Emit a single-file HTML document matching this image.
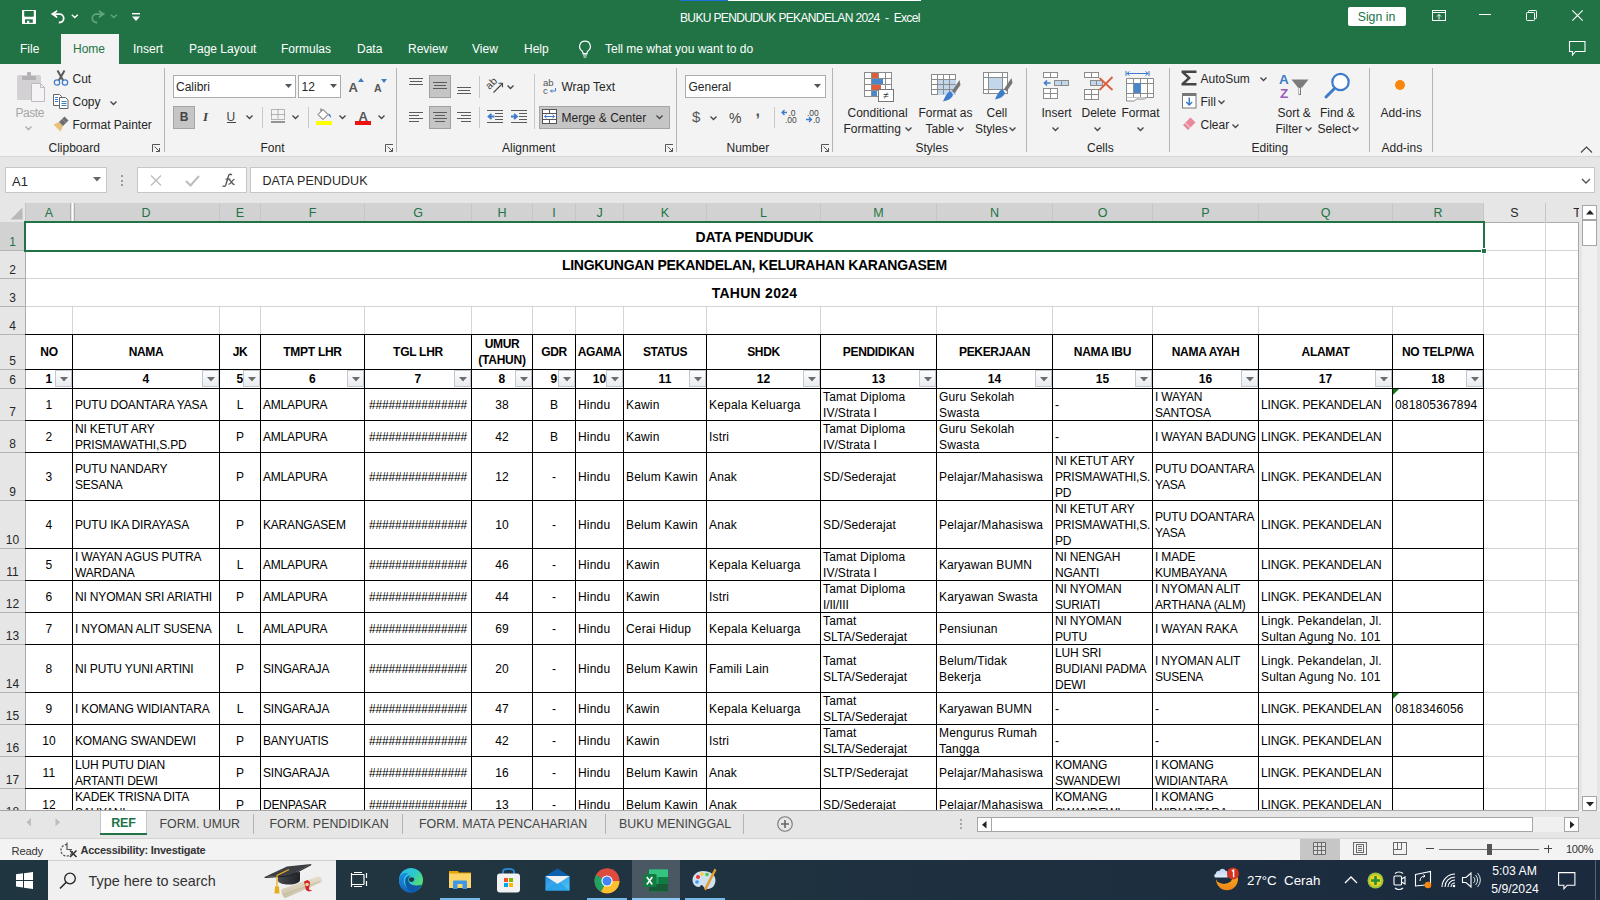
<!DOCTYPE html>
<html><head><meta charset="utf-8"><title>Excel</title>
<style>
html,body{margin:0;padding:0;width:1600px;height:900px;overflow:hidden;background:#fff;}
body{position:relative;font-family:"Liberation Sans", sans-serif;}
.t{position:absolute;white-space:pre;}
.r{position:absolute;box-sizing:border-box;}
svg.r{overflow:visible}
</style></head><body>
<div class="r" style="left:0px;top:0px;width:1600px;height:64px;background:#217346"></div><div class="r" style="left:680px;top:0px;width:241px;height:1px;background:#ffffff"></div><div class="r" style="left:680px;top:0px;width:48px;height:1px;background:#1e6fd9"></div><svg class="r" style="left:21px;top:9px;" width="17" height="17" viewBox="0 0 17 17"><rect x="1" y="1" width="14" height="14" rx="0.8" fill="#fff"/><path d="M3.2 2.1h9.6v4.6q0 1-1 1H4.2q-1 0-1-1z" fill="#217346"/><rect x="4" y="10.3" width="7.8" height="3.5" fill="#217346"/><rect x="6" y="11.8" width="2.3" height="2.2" fill="#fff"/></svg><svg class="r" style="left:50px;top:9px;" width="18" height="15" viewBox="0 0 18 15"><path d="M0.8 5.1L7 0.9 7.4 2.6 4.6 5.1 7.4 7.6 7 9.3z" fill="#fff"/><path d="M5 5.1H9.5a4.2 4.2 0 0 1 0 8.4H8.8" fill="none" stroke="#fff" stroke-width="1.8"/></svg><svg class="r" style="left:71px;top:14px;" width="8" height="5" viewBox="0 0 8 5"><path d="M0.8 0.8L3.8 3.6L6.8 0.8" fill="none" stroke="#fff" stroke-width="1.4"/></svg><svg class="r" style="left:89px;top:9px;" width="18" height="15" viewBox="0 0 18 15"><path d="M16.2 5.1L10 0.9 9.6 2.6 12.4 5.1 9.6 7.6 10 9.3z" fill="#5fa57d"/><path d="M12 5.1H7.5a4.2 4.2 0 0 0 0 8.4H8.2" fill="none" stroke="#5fa57d" stroke-width="1.8"/></svg><svg class="r" style="left:110px;top:14px;" width="8" height="5" viewBox="0 0 8 5"><path d="M0.8 0.8L3.8 3.6L6.8 0.8" fill="none" stroke="#5fa57d" stroke-width="1.4"/></svg><svg class="r" style="left:132px;top:13px;" width="8" height="9" viewBox="0 0 8 9"><rect x="0" y="0" width="8" height="1.4" fill="#fff"/><path d="M0 3.5h8L4 8z" fill="#fff"/></svg><div class="t" style="top:11.84px;font-size:12px;line-height:12px;color:#ffffff;letter-spacing:-0.64px;left:680px;">BUKU PENDUDUK PEKANDELAN 2024&nbsp;&nbsp;-&nbsp;&nbsp;Excel</div><div class="r" style="left:1348px;top:7px;width:58px;height:19px;background:#fff;border-radius:2px"></div><div class="t" style="top:11.09px;font-size:12.3px;line-height:12.3px;color:#217346;left:1347.50px;width:58px;text-align:center;">Sign in</div><svg class="r" style="left:1432px;top:10px;" width="14" height="11" viewBox="0 0 14 11"><rect x="0.5" y="0.5" width="13" height="10" fill="none" stroke="#fff" stroke-width="1"/><path d="M0.5 2.5h13" stroke="#fff" stroke-width="1"/><path d="M7 9.5V4.5M5 6.5l2-2 2 2" fill="none" stroke="#fff" stroke-width="1"/></svg><div class="r" style="left:1479px;top:14px;width:12px;height:1px;background:#fff"></div><svg class="r" style="left:1526px;top:10px;" width="11" height="11" viewBox="0 0 11 11"><rect x="0.5" y="2.5" width="8" height="8" rx="0.8" fill="none" stroke="#fff" stroke-width="1"/><path d="M2.5 2.5V1.3q0-.8.8-.8h6.4q.8 0 .8.8v6.4q0 .8-.8.8H8.5" fill="none" stroke="#fff" stroke-width="1"/></svg><svg class="r" style="left:1572px;top:10px;" width="11" height="11" viewBox="0 0 11 11"><path d="M0.3 0.3L10.7 10.7M10.7 0.3L0.3 10.7" stroke="#fff" stroke-width="1.1"/></svg><div class="r" style="left:61px;top:34px;width:58px;height:31px;background:#f3f3f3"></div><div class="t" style="top:42.84px;font-size:12px;line-height:12px;color:#ffffff;left:20px;">File</div><div class="t" style="top:42.84px;font-size:12px;line-height:12px;color:#217346;left:73px;">Home</div><div class="t" style="top:42.84px;font-size:12px;line-height:12px;color:#ffffff;left:133px;">Insert</div><div class="t" style="top:42.84px;font-size:12px;line-height:12px;color:#ffffff;left:189px;">Page Layout</div><div class="t" style="top:42.84px;font-size:12px;line-height:12px;color:#ffffff;left:281px;">Formulas</div><div class="t" style="top:42.84px;font-size:12px;line-height:12px;color:#ffffff;left:357px;">Data</div><div class="t" style="top:42.84px;font-size:12px;line-height:12px;color:#ffffff;left:408px;">Review</div><div class="t" style="top:42.84px;font-size:12px;line-height:12px;color:#ffffff;left:472px;">View</div><div class="t" style="top:42.84px;font-size:12px;line-height:12px;color:#ffffff;left:524px;">Help</div><svg class="r" style="left:578px;top:40px;" width="14" height="18" viewBox="0 0 14 18"><path d="M7 1.2a5.3 5.3 0 0 0-3 9.7c.6.5.9 1.1.9 1.9v.8h4.2v-.8c0-.8.3-1.4.9-1.9A5.3 5.3 0 0 0 7 1.2z" fill="none" stroke="#fff" stroke-width="1.2"/><path d="M5 15h4M5.5 17h3" stroke="#fff" stroke-width="1.2"/></svg><div class="t" style="top:42.84px;font-size:12px;line-height:12px;color:#ffffff;left:605px;">Tell me what you want to do</div><svg class="r" style="left:1569px;top:41px;" width="17" height="15" viewBox="0 0 17 15"><path d="M0.5 0.5h15.5v10H6.5l-3 3.5V10.5H0.5z" fill="none" stroke="#fff" stroke-width="1.1"/></svg><div class="r" style="left:0px;top:64px;width:1600px;height:92px;background:#f3f3f3"></div><div class="r" style="left:0px;top:156px;width:1600px;height:1px;background:#d6d6d6"></div><svg class="r" style="left:17px;top:72px;" width="29" height="31" viewBox="0 0 29 31"><rect x="0" y="3" width="24" height="25" rx="1.5" fill="#d3d1d3"/><rect x="5" y="4" width="14" height="4" rx="1" fill="#b3b1b3"/><rect x="10" y="0" width="4" height="4" rx="1" fill="#b3b1b3"/><path d="M14.5 11.5h9l4 4v14h-13z" fill="#f5f3f5" stroke="#bdbbbd" stroke-width="1"/><path d="M23.5 11.5v4h4" fill="none" stroke="#bdbbbd" stroke-width="1"/></svg><div class="t" style="top:106.84px;font-size:12px;line-height:12px;color:#a6a6a6;letter-spacing:-0.45px;left:15.5px;">Paste</div><svg class="r" style="left:25px;top:126px;" width="7" height="4" viewBox="0 0 7 4"><path d="M0.5 0.5L3.5 3.5L6.5 0.5" fill="none" stroke="#aaa" stroke-width="1.3"/></svg><svg class="r" style="left:53px;top:70px;" width="16" height="16" viewBox="0 0 16 16"><path d="M4.5 0.5L10.2 10.5M11.5 0.5L5.8 10.5" stroke="#5a5a5a" stroke-width="2"/><circle cx="4" cy="12.5" r="2.7" fill="none" stroke="#3d7cc9" stroke-width="1.2"/><circle cx="12" cy="12.5" r="2.7" fill="none" stroke="#3d7cc9" stroke-width="1.2"/></svg><div class="t" style="top:72.84px;font-size:12px;line-height:12px;color:#262626;left:72.5px;">Cut</div><svg class="r" style="left:53px;top:94px;" width="16" height="15" viewBox="0 0 16 15"><path d="M0.5 0.5h6l2 2v9h-8z" fill="#fff" stroke="#666" stroke-width="1"/><path d="M6.5 3.5h6l2.5 2.5v8.5h-8.5z" fill="#fff" stroke="#666" stroke-width="1"/><path d="M2 3.5h3M2 5.5h3M2 7.5h3" stroke="#3d7cc9" stroke-width="1"/><path d="M8.5 7.5h5M8.5 9.5h5M8.5 11.5h5" stroke="#3d7cc9" stroke-width="1"/></svg><div class="t" style="top:95.84px;font-size:12px;line-height:12px;color:#262626;left:72.5px;">Copy</div><svg class="r" style="left:110px;top:101px;" width="7" height="4" viewBox="0 0 7 4"><path d="M0.5 0.5L3.5 3.5L6.5 0.5" fill="none" stroke="#444" stroke-width="1.3"/></svg><svg class="r" style="left:53px;top:116px;" width="17" height="16" viewBox="0 0 17 16"><path d="M0.5 8.5L6 6l4 4-2.5 5.5z" fill="#e8c078"/><path d="M6 6l4 4 3-3-4-4z" fill="#6e6e6e"/><path d="M9 3l2.5-2.5 4 4L13 7z" fill="#6e6e6e"/></svg><div class="t" style="top:118.84px;font-size:12px;line-height:12px;color:#262626;left:72.5px;">Format Painter</div><div class="t" style="top:141.84px;font-size:12px;line-height:12px;color:#262626;left:48.5px;">Clipboard</div><svg class="r" style="left:152px;top:144px;" width="9" height="9" viewBox="0 0 9 9"><path d="M0.5 8V0.5H8" fill="none" stroke="#555" stroke-width="1"/><path d="M2.5 2.5L7.5 7.5M4 7.5h3.5V4" fill="none" stroke="#555" stroke-width="1"/></svg><div class="r" style="left:164px;top:68px;width:1px;height:84px;background:#b4b4b4"></div><div class="r" style="left:173px;top:75px;width:123px;height:23px;background:#fff;border:1px solid #ababab"></div><div class="t" style="top:80.84px;font-size:12px;line-height:12px;color:#262626;left:176px;">Calibri</div><svg class="r" style="left:285px;top:84px;" width="7" height="4" viewBox="0 0 7 4"><path d="M0 0h7L3.5 4z" fill="#555"/></svg><div class="r" style="left:298px;top:75px;width:43px;height:23px;background:#fff;border:1px solid #ababab"></div><div class="t" style="top:80.84px;font-size:12px;line-height:12px;color:#262626;left:301.5px;">12</div><svg class="r" style="left:330px;top:84px;" width="7" height="4" viewBox="0 0 7 4"><path d="M0 0h7L3.5 4z" fill="#555"/></svg><div class="t" style="top:81.00px;font-size:13px;line-height:13px;color:#555;font-weight:700;left:348.5px;">A</div><svg class="r" style="left:358px;top:78px;" width="6" height="4" viewBox="0 0 6 4"><path d="M0 4h6L3 0z" fill="#3d7cc9"/></svg><div class="t" style="top:83.11px;font-size:10.5px;line-height:10.5px;color:#555;font-weight:700;left:374px;">A</div><svg class="r" style="left:381px;top:79px;" width="6" height="4" viewBox="0 0 6 4"><path d="M0 0h6L3 4z" fill="#3d7cc9"/></svg><div class="r" style="left:173px;top:106px;width:22px;height:23px;background:#c5c5c5;border:1px solid #a5a5a5"></div><div class="t" style="top:110.84px;font-size:12px;line-height:12px;color:#444;font-weight:700;left:173.00px;width:22px;text-align:center;">B</div><div class="t" style="left:203px;top:110px;font-size:13px;line-height:13px;color:#444;font-family:'Liberation Serif',serif;font-style:italic;font-weight:700">I</div><div class="t" style="top:110.84px;font-size:12px;line-height:12px;color:#444;left:226.5px;">U</div><div class="r" style="left:227px;top:122px;width:9px;height:1px;background:#444"></div><svg class="r" style="left:246px;top:115px;" width="7" height="4" viewBox="0 0 7 4"><path d="M0.5 0.5L3.5 3.5L6.5 0.5" fill="none" stroke="#444" stroke-width="1.3"/></svg><div class="r" style="left:262px;top:107px;width:1px;height:21px;background:#c8c8c8"></div><svg class="r" style="left:271px;top:109px;" width="14" height="14" viewBox="0 0 14 14"><path d="M0.5 0.5h13v10h-13zM7 0.5v10M0.5 5.5h13" fill="none" stroke="#777" stroke-width="1" stroke-dasharray="1 1"/><path d="M0 13h14" stroke="#555" stroke-width="1.2"/></svg><svg class="r" style="left:292px;top:115px;" width="7" height="4" viewBox="0 0 7 4"><path d="M0.5 0.5L3.5 3.5L6.5 0.5" fill="none" stroke="#444" stroke-width="1.3"/></svg><div class="r" style="left:308px;top:107px;width:1px;height:21px;background:#c8c8c8"></div><svg class="r" style="left:316px;top:108px;" width="17" height="13" viewBox="0 0 17 13"><path d="M2 6.5L7 1.5l5 5-5 5z" fill="#fff" stroke="#555" stroke-width="1"/><path d="M5 3V0.5" stroke="#555" stroke-width="1"/><path d="M12.5 5.5c2 1 3 2.5 2.5 4.5-.6-1-1.4-2-2.5-2.5z" fill="#3d7cc9"/></svg><div class="r" style="left:316px;top:121px;width:16px;height:4px;background:#ffff00"></div><svg class="r" style="left:339px;top:115px;" width="7" height="4" viewBox="0 0 7 4"><path d="M0.5 0.5L3.5 3.5L6.5 0.5" fill="none" stroke="#444" stroke-width="1.3"/></svg><div class="t" style="top:109.50px;font-size:13px;line-height:13px;color:#555;font-weight:700;left:358.5px;">A</div><div class="r" style="left:355px;top:121px;width:16px;height:4px;background:#ee1111"></div><svg class="r" style="left:378px;top:115px;" width="7" height="4" viewBox="0 0 7 4"><path d="M0.5 0.5L3.5 3.5L6.5 0.5" fill="none" stroke="#444" stroke-width="1.3"/></svg><div class="t" style="top:141.84px;font-size:12px;line-height:12px;color:#262626;left:260.5px;">Font</div><svg class="r" style="left:385px;top:144px;" width="9" height="9" viewBox="0 0 9 9"><path d="M0.5 8V0.5H8" fill="none" stroke="#555" stroke-width="1"/><path d="M2.5 2.5L7.5 7.5M4 7.5h3.5V4" fill="none" stroke="#555" stroke-width="1"/></svg><div class="r" style="left:396px;top:68px;width:1px;height:84px;background:#b4b4b4"></div><div class="r" style="left:409px;top:78px;width:14px;height:1px;background:#5a5a5a"></div><div class="r" style="left:410px;top:81px;width:12px;height:1px;background:#5a5a5a"></div><div class="r" style="left:409px;top:84px;width:14px;height:1px;background:#5a5a5a"></div><div class="r" style="left:429px;top:75px;width:22px;height:23px;background:#c5c5c5;border:1px solid #a0a0a0"></div><div class="r" style="left:433px;top:82px;width:14px;height:1px;background:#5a5a5a"></div><div class="r" style="left:434px;top:85px;width:12px;height:1px;background:#5a5a5a"></div><div class="r" style="left:433px;top:88px;width:14px;height:1px;background:#5a5a5a"></div><div class="r" style="left:457px;top:87px;width:14px;height:1px;background:#5a5a5a"></div><div class="r" style="left:458px;top:90px;width:12px;height:1px;background:#5a5a5a"></div><div class="r" style="left:457px;top:93px;width:14px;height:1px;background:#5a5a5a"></div><div class="r" style="left:479px;top:76px;width:1px;height:22px;background:#c8c8c8"></div><svg class="r" style="left:486px;top:76px;" width="20" height="19" viewBox="0 0 20 19"><text x="0" y="0" font-size="10.5" font-family="Liberation Sans" fill="#444" transform="translate(3.5 14) rotate(-45)">ab</text><path d="M7.5 16.5L16 8" stroke="#444" stroke-width="1.1"/><path d="M12.5 7.3h4v4" fill="none" stroke="#444" stroke-width="1.1"/></svg><svg class="r" style="left:507px;top:85px;" width="7" height="4" viewBox="0 0 7 4"><path d="M0.5 0.5L3.5 3.5L6.5 0.5" fill="none" stroke="#444" stroke-width="1.3"/></svg><div class="r" style="left:534px;top:74px;width:1px;height:55px;background:#c8c8c8"></div><svg class="r" style="left:543px;top:78px;" width="14" height="16" viewBox="0 0 14 16"><text x="0" y="8" font-size="9.5" font-family="Liberation Sans" fill="#555">ab</text><text x="0" y="15.5" font-size="9.5" font-family="Liberation Sans" fill="#555">c</text><path d="M12.5 10v3h-5M9 11.5l-1.5 1.5 1.5 1.5" fill="none" stroke="#3d7cc9" stroke-width="1"/></svg><div class="t" style="top:80.84px;font-size:12px;line-height:12px;color:#262626;left:561.5px;">Wrap Text</div><div class="r" style="left:409px;top:112px;width:14px;height:1px;background:#5a5a5a"></div><div class="r" style="left:409px;top:115px;width:10px;height:1px;background:#5a5a5a"></div><div class="r" style="left:409px;top:118px;width:14px;height:1px;background:#5a5a5a"></div><div class="r" style="left:409px;top:121px;width:10px;height:1px;background:#5a5a5a"></div><div class="r" style="left:429px;top:106px;width:22px;height:23px;background:#c5c5c5;border:1px solid #a0a0a0"></div><div class="r" style="left:433px;top:112px;width:14px;height:1px;background:#5a5a5a"></div><div class="r" style="left:435px;top:115px;width:10px;height:1px;background:#5a5a5a"></div><div class="r" style="left:433px;top:118px;width:14px;height:1px;background:#5a5a5a"></div><div class="r" style="left:435px;top:121px;width:10px;height:1px;background:#5a5a5a"></div><div class="r" style="left:457px;top:112px;width:14px;height:1px;background:#5a5a5a"></div><div class="r" style="left:461px;top:115px;width:10px;height:1px;background:#5a5a5a"></div><div class="r" style="left:457px;top:118px;width:14px;height:1px;background:#5a5a5a"></div><div class="r" style="left:461px;top:121px;width:10px;height:1px;background:#5a5a5a"></div><div class="r" style="left:479px;top:107px;width:1px;height:21px;background:#c8c8c8"></div><div class="r" style="left:487px;top:110px;width:16px;height:1px;background:#5a5a5a"></div><div class="r" style="left:487px;top:122px;width:16px;height:1px;background:#5a5a5a"></div><div class="r" style="left:495px;top:113px;width:8px;height:1px;background:#5a5a5a"></div><div class="r" style="left:495px;top:116px;width:8px;height:1px;background:#5a5a5a"></div><div class="r" style="left:495px;top:119px;width:8px;height:1px;background:#5a5a5a"></div><svg class="r" style="left:487px;top:113px;" width="8" height="8" viewBox="0 0 8 8"><path d="M7.5 3.5H2M4.5 0.8L1.5 3.5l3 2.7" fill="none" stroke="#3d7cc9" stroke-width="1.8"/></svg><div class="r" style="left:511px;top:110px;width:16px;height:1px;background:#5a5a5a"></div><div class="r" style="left:511px;top:122px;width:16px;height:1px;background:#5a5a5a"></div><div class="r" style="left:519px;top:113px;width:8px;height:1px;background:#5a5a5a"></div><div class="r" style="left:519px;top:116px;width:8px;height:1px;background:#5a5a5a"></div><div class="r" style="left:519px;top:119px;width:8px;height:1px;background:#5a5a5a"></div><svg class="r" style="left:511px;top:113px;" width="8" height="8" viewBox="0 0 8 8"><path d="M0 3.5h5.5M3 0.8l3 2.7-3 2.7" fill="none" stroke="#3d7cc9" stroke-width="1.8"/></svg><div class="r" style="left:539px;top:106px;width:131px;height:23px;background:#c5c5c5;border:1px solid #a5a5a5"></div><svg class="r" style="left:542px;top:109px;" width="15" height="15" viewBox="0 0 15 15"><rect x="0.5" y="0.5" width="14" height="14" fill="#fff" stroke="#555" stroke-width="1"/><path d="M0.5 4.5h14M0.5 10.5h14M7.5 0.5v4M7.5 10.5v4" stroke="#555" stroke-width="1"/><path d="M2.5 7.5h10M4.5 5.8L2.5 7.5l2 1.7M10.5 5.8l2 1.7-2 1.7" fill="none" stroke="#3d7cc9" stroke-width="1"/></svg><div class="t" style="top:111.84px;font-size:12px;line-height:12px;color:#262626;left:561.5px;">Merge &amp; Center</div><svg class="r" style="left:656px;top:115px;" width="7" height="4" viewBox="0 0 7 4"><path d="M0.5 0.5L3.5 3.5L6.5 0.5" fill="none" stroke="#444" stroke-width="1.3"/></svg><div class="t" style="top:141.84px;font-size:12px;line-height:12px;color:#262626;left:502px;">Alignment</div><svg class="r" style="left:665px;top:144px;" width="9" height="9" viewBox="0 0 9 9"><path d="M0.5 8V0.5H8" fill="none" stroke="#555" stroke-width="1"/><path d="M2.5 2.5L7.5 7.5M4 7.5h3.5V4" fill="none" stroke="#555" stroke-width="1"/></svg><div class="r" style="left:676px;top:68px;width:1px;height:84px;background:#b4b4b4"></div><div class="r" style="left:685px;top:75px;width:141px;height:23px;background:#fff;border:1px solid #ababab"></div><div class="t" style="top:80.84px;font-size:12px;line-height:12px;color:#262626;left:688.5px;">General</div><svg class="r" style="left:814px;top:84px;" width="7" height="4" viewBox="0 0 7 4"><path d="M0 0h7L3.5 4z" fill="#555"/></svg><div class="t" style="top:109.30px;font-size:15px;line-height:15px;color:#555;left:692px;">$</div><svg class="r" style="left:710px;top:116px;" width="7" height="4" viewBox="0 0 7 4"><path d="M0.5 0.5L3.5 3.5L6.5 0.5" fill="none" stroke="#444" stroke-width="1.3"/></svg><div class="t" style="top:111.15px;font-size:14px;line-height:14px;color:#444;left:729px;">%</div><div class="t" style="top:103.46px;font-size:16px;line-height:16px;color:#555;font-weight:700;left:755.5px;">,</div><div class="r" style="left:774px;top:107px;width:1px;height:21px;background:#c8c8c8"></div><svg class="r" style="left:781px;top:108px;" width="17" height="16" viewBox="0 0 17 16"><path d="M1 4.5h5M3.5 2L1 4.5 3.5 7" fill="none" stroke="#3d7cc9" stroke-width="1.3"/><text x="7.5" y="8" font-size="8.5" font-family="Liberation Sans" fill="#444">.0</text><text x="4" y="15" font-size="8.5" font-family="Liberation Sans" fill="#444">.00</text></svg><svg class="r" style="left:805px;top:108px;" width="17" height="16" viewBox="0 0 17 16"><text x="2" y="8" font-size="8.5" font-family="Liberation Sans" fill="#444">.00</text><path d="M1 11.5h5.5M4 9l2.5 2.5L4 14" fill="none" stroke="#3d7cc9" stroke-width="1.3"/><text x="8" y="15" font-size="8.5" font-family="Liberation Sans" fill="#444">.0</text></svg><div class="t" style="top:141.84px;font-size:12px;line-height:12px;color:#262626;left:726.5px;">Number</div><svg class="r" style="left:821px;top:144px;" width="9" height="9" viewBox="0 0 9 9"><path d="M0.5 8V0.5H8" fill="none" stroke="#555" stroke-width="1"/><path d="M2.5 2.5L7.5 7.5M4 7.5h3.5V4" fill="none" stroke="#555" stroke-width="1"/></svg><div class="r" style="left:832px;top:68px;width:1px;height:84px;background:#b4b4b4"></div><svg class="r" style="left:864px;top:72px;" width="31" height="31" viewBox="0 0 31 31"><g fill="#fff" stroke="#8c8c8c" stroke-width="1"><rect x="0.5" y="0.5" width="27" height="24"/></g><path d="M0.5 6.5h27M0.5 12.5h27M0.5 18.5h27M7.5 0.5v24M14.5 0.5v24M21.5 0.5v24" stroke="#8c8c8c" stroke-width="1"/><rect x="8" y="1" width="6" height="5" fill="#e05c3a"/><rect x="8" y="7" width="11" height="5" fill="#4a87c8"/><rect x="8" y="13" width="9" height="5" fill="#e05c3a"/><rect x="8" y="19" width="5" height="5" fill="#4a87c8"/><rect x="14.5" y="17.5" width="15" height="12" fill="#fff" stroke="#777" stroke-width="1"/><text x="22" y="27" font-size="10" text-anchor="middle" font-family="Liberation Sans" fill="#333">&#8800;</text></svg><div class="t" style="top:106.84px;font-size:12px;line-height:12px;color:#262626;left:847.5px;">Conditional</div><div class="t" style="top:122.84px;font-size:12px;line-height:12px;color:#262626;left:843.5px;">Formatting</div><svg class="r" style="left:905px;top:127px;" width="7" height="4" viewBox="0 0 7 4"><path d="M0.5 0.5L3.5 3.5L6.5 0.5" fill="none" stroke="#444" stroke-width="1.3"/></svg><svg class="r" style="left:931px;top:74px;" width="30" height="28" viewBox="0 0 30 28"><rect x="0.5" y="0.5" width="24" height="20" fill="#fff" stroke="#8c8c8c"/><rect x="7" y="6" width="18" height="15" fill="#c3d7ec"/><path d="M0.5 5.5h24M0.5 10.5h24M0.5 15.5h24M6.5 0.5v20M12.5 0.5v20M18.5 0.5v20" stroke="#8c8c8c" stroke-width="1"/><path d="M28.5 6L21 17l2.5 2.5L29.5 11z" fill="#777"/><path d="M20 17.5c-3 0-5 3-8 10 5-1 9-3 10-6.5z" fill="#3d7cc9"/></svg><div class="t" style="top:106.84px;font-size:12px;line-height:12px;color:#262626;left:918.5px;">Format as</div><div class="t" style="top:122.84px;font-size:12px;line-height:12px;color:#262626;left:925.5px;">Table</div><svg class="r" style="left:957px;top:127px;" width="7" height="4" viewBox="0 0 7 4"><path d="M0.5 0.5L3.5 3.5L6.5 0.5" fill="none" stroke="#444" stroke-width="1.3"/></svg><svg class="r" style="left:983px;top:72px;" width="30" height="28" viewBox="0 0 30 28"><rect x="0.5" y="0.5" width="24" height="21" fill="#fff" stroke="#8c8c8c"/><rect x="6" y="6" width="13" height="11" fill="#c3d7ec"/><path d="M0.5 5.5h24M0.5 17.5h24M5.5 0.5v21M19.5 0.5v21" stroke="#8c8c8c" stroke-width="1"/><path d="M28.5 6L21 17l2.5 2.5L29.5 11z" fill="#777"/><path d="M20 17.5c-3 0-5 3-8 10 5-1 9-3 10-6.5z" fill="#3d7cc9"/></svg><div class="t" style="top:106.84px;font-size:12px;line-height:12px;color:#262626;left:986.5px;">Cell</div><div class="t" style="top:122.84px;font-size:12px;line-height:12px;color:#262626;left:975px;">Styles</div><svg class="r" style="left:1009px;top:127px;" width="7" height="4" viewBox="0 0 7 4"><path d="M0.5 0.5L3.5 3.5L6.5 0.5" fill="none" stroke="#444" stroke-width="1.3"/></svg><div class="t" style="top:141.84px;font-size:12px;line-height:12px;color:#262626;left:915.5px;">Styles</div><div class="r" style="left:1026px;top:68px;width:1px;height:84px;background:#b4b4b4"></div><svg class="r" style="left:1042px;top:71px;" width="29" height="30" viewBox="0 0 29 30"><g fill="#fff" stroke="#8c8c8c" stroke-width="1"><rect x="1.5" y="1.5" width="14" height="5"/><path d="M8.5 1.5v5"/><rect x="12.5" y="9.5" width="14" height="5" fill="#c3d7ec"/><path d="M19.5 9.5v5"/><rect x="1.5" y="17.5" width="14" height="10"/><path d="M1.5 22.5h14M8.5 17.5v10"/></g><path d="M2.5 12h6M5 9.5L2.5 12 5 14.5" fill="none" stroke="#3d7cc9" stroke-width="1.6"/></svg><div class="t" style="top:106.84px;font-size:12px;line-height:12px;color:#262626;left:1041.5px;">Insert</div><svg class="r" style="left:1052px;top:127px;" width="7" height="4" viewBox="0 0 7 4"><path d="M0.5 0.5L3.5 3.5L6.5 0.5" fill="none" stroke="#444" stroke-width="1.3"/></svg><svg class="r" style="left:1083px;top:71px;" width="32" height="30" viewBox="0 0 32 30"><g fill="#fff" stroke="#8c8c8c" stroke-width="1"><rect x="1.5" y="1.5" width="14" height="5"/><path d="M8.5 1.5v5"/><rect x="7.5" y="9.5" width="12" height="5" fill="#c3d7ec"/><path d="M13.5 9.5v5"/><rect x="1.5" y="18.5" width="14" height="10"/><path d="M1.5 23.5h14M8.5 18.5v10"/></g><path d="M16.5 7l13 12M29.5 6l-13 13" stroke="#e05c3a" stroke-width="1.8"/></svg><div class="t" style="top:106.84px;font-size:12px;line-height:12px;color:#262626;left:1081.5px;">Delete</div><svg class="r" style="left:1094px;top:127px;" width="7" height="4" viewBox="0 0 7 4"><path d="M0.5 0.5L3.5 3.5L6.5 0.5" fill="none" stroke="#444" stroke-width="1.3"/></svg><svg class="r" style="left:1125px;top:70px;" width="30" height="32" viewBox="0 0 30 32"><path d="M1 1v5M24 1v5M1.5 3.5h22M4.5 1.5L2 3.5l2.5 2M20.5 1.5l2.5 2-2.5 2" fill="none" stroke="#3d7cc9" stroke-width="1"/><g fill="#fff" stroke="#8c8c8c" stroke-width="1"><path d="M1.5 8.5h27v19h-27z"/><path d="M1.5 13.5h27M1.5 23.5h27M8.5 8.5v19M15.5 8.5v19M22.5 8.5v19"/><path d="M1.5 27.5v3.5h8l2-2h8l2-1.5"/></g><rect x="9" y="13" width="7" height="10" fill="#4a87c8"/></svg><div class="t" style="top:106.84px;font-size:12px;line-height:12px;color:#262626;left:1121.5px;">Format</div><svg class="r" style="left:1136.5px;top:127px;" width="7" height="4" viewBox="0 0 7 4"><path d="M0.5 0.5L3.5 3.5L6.5 0.5" fill="none" stroke="#444" stroke-width="1.3"/></svg><div class="t" style="top:141.84px;font-size:12px;line-height:12px;color:#262626;left:1087px;">Cells</div><div class="r" style="left:1169px;top:68px;width:1px;height:84px;background:#b4b4b4"></div><svg class="r" style="left:1181px;top:70px;" width="16" height="16" viewBox="0 0 16 16"><path d="M0.5 0.5H15.5V3H4.6L10 8L4.6 13H15.5V15.5H0.5V13.2L6.4 8L0.5 2.8z" fill="#444"/></svg><div class="t" style="top:72.84px;font-size:12px;line-height:12px;color:#262626;left:1200.5px;">AutoSum</div><svg class="r" style="left:1260px;top:77px;" width="7" height="4" viewBox="0 0 7 4"><path d="M0.5 0.5L3.5 3.5L6.5 0.5" fill="none" stroke="#444" stroke-width="1.3"/></svg><svg class="r" style="left:1182px;top:93px;" width="15" height="16" viewBox="0 0 15 16"><rect x="0.5" y="0.5" width="13.5" height="14.5" fill="#fff" stroke="#777"/><rect x="0.5" y="0.5" width="13.5" height="2.5" fill="#777"/><path d="M7.25 4.5v7.5M4.2 9l3 3 3-3" fill="none" stroke="#3d7cc9" stroke-width="1.5"/></svg><div class="t" style="top:95.84px;font-size:12px;line-height:12px;color:#262626;left:1200.5px;">Fill</div><svg class="r" style="left:1218px;top:100px;" width="7" height="4" viewBox="0 0 7 4"><path d="M0.5 0.5L3.5 3.5L6.5 0.5" fill="none" stroke="#444" stroke-width="1.3"/></svg><svg class="r" style="left:1182px;top:117px;" width="14" height="14" viewBox="0 0 14 14"><path d="M8.5 0.5L13.5 5.5L6 13L1 8z" fill="#e8889b"/><path d="M3.2 5.8L8.2 10.8" stroke="#f3f3f3" stroke-width="1"/></svg><div class="t" style="top:119.34px;font-size:12px;line-height:12px;color:#262626;left:1200.5px;">Clear</div><svg class="r" style="left:1232px;top:124px;" width="7" height="4" viewBox="0 0 7 4"><path d="M0.5 0.5L3.5 3.5L6.5 0.5" fill="none" stroke="#444" stroke-width="1.3"/></svg><div class="t" style="top:73.07px;font-size:13.5px;line-height:13.5px;color:#3d7cc9;font-weight:700;left:1279px;">A</div><div class="t" style="top:87.07px;font-size:13.5px;line-height:13.5px;color:#9b59c0;font-weight:700;left:1280px;">Z</div><svg class="r" style="left:1291px;top:79px;" width="18" height="17" viewBox="0 0 18 17"><path d="M0.5 0.5h17l-6 7.5h-5z" fill="#7c7c7c"/><path d="M6.5 8h5v0.5h-1.5v7.5h-2.5V8.5H6.5z" fill="#7c7c7c"/><path d="M8 9v6h1V9z" fill="#f3f3f3"/></svg><div class="t" style="top:106.84px;font-size:12px;line-height:12px;color:#262626;left:1277.5px;">Sort &amp;</div><div class="t" style="top:122.84px;font-size:12px;line-height:12px;color:#262626;left:1275.5px;">Filter</div><svg class="r" style="left:1305px;top:127px;" width="7" height="4" viewBox="0 0 7 4"><path d="M0.5 0.5L3.5 3.5L6.5 0.5" fill="none" stroke="#444" stroke-width="1.3"/></svg><svg class="r" style="left:1323px;top:72px;" width="29" height="28" viewBox="0 0 29 28"><circle cx="17.5" cy="10" r="8.2" fill="#fff" stroke="#3d7cc9" stroke-width="2.2"/><path d="M11.5 16.5L3 25" stroke="#3d7cc9" stroke-width="3" stroke-linecap="round"/></svg><div class="t" style="top:106.84px;font-size:12px;line-height:12px;color:#262626;left:1320px;">Find &amp;</div><div class="t" style="top:122.84px;font-size:12px;line-height:12px;color:#262626;left:1317.5px;">Select</div><svg class="r" style="left:1352px;top:127px;" width="7" height="4" viewBox="0 0 7 4"><path d="M0.5 0.5L3.5 3.5L6.5 0.5" fill="none" stroke="#444" stroke-width="1.3"/></svg><div class="t" style="top:141.84px;font-size:12px;line-height:12px;color:#262626;left:1251.5px;">Editing</div><div class="r" style="left:1369px;top:68px;width:1px;height:84px;background:#b4b4b4"></div><svg class="r" style="left:1394px;top:79px;" width="12" height="12" viewBox="0 0 12 12"><circle cx="6" cy="6" r="5" fill="#f7870f"/></svg><div class="t" style="top:106.84px;font-size:12px;line-height:12px;color:#262626;left:1380.5px;">Add-ins</div><div class="t" style="top:141.84px;font-size:12px;line-height:12px;color:#262626;left:1381.5px;">Add-ins</div><div class="r" style="left:1432px;top:68px;width:1px;height:84px;background:#b4b4b4"></div><svg class="r" style="left:1580px;top:146px;" width="13" height="8" viewBox="0 0 13 8"><path d="M1 6.5L6.5 1 12 6.5" fill="none" stroke="#444" stroke-width="1.1"/></svg><div class="r" style="left:0px;top:157px;width:1600px;height:46px;background:#e6e6e6"></div><div class="r" style="left:5px;top:167px;width:102px;height:26px;background:#fff;border:1px solid #c6c6c6"></div><div class="t" style="top:174.50px;font-size:13px;line-height:13px;color:#262626;left:12px;">A1</div><svg class="r" style="left:93px;top:177px;" width="8" height="5" viewBox="0 0 8 5"><path d="M0 0h8L4 4.5z" fill="#666"/></svg><div class="r" style="left:121px;top:175px;width:2px;height:2px;background:#9a9a9a"></div><div class="r" style="left:121px;top:179.5px;width:2px;height:2px;background:#9a9a9a"></div><div class="r" style="left:121px;top:184px;width:2px;height:2px;background:#9a9a9a"></div><div class="r" style="left:137px;top:167px;width:110px;height:26px;background:#fff;border:1px solid #c6c6c6"></div><svg class="r" style="left:150px;top:175px;" width="12" height="11" viewBox="0 0 12 11"><path d="M1 0.5l10 10M11 0.5L1 10.5" stroke="#bdbdbd" stroke-width="1.4"/></svg><svg class="r" style="left:185px;top:175px;" width="15" height="12" viewBox="0 0 15 12"><path d="M1 6l4.5 4.5L14 1" fill="none" stroke="#bdbdbd" stroke-width="2"/></svg><svg class="r" style="left:220px;top:172px;" width="16" height="16" viewBox="0 0 16 16"><path d="M11.8 3.2C11 1.8 9.2 1.9 8.6 3.6L5.8 13C5.2 14.6 3.8 14.8 2.6 13.8" fill="none" stroke="#555" stroke-width="1.4"/><path d="M5.6 7.1h4.8" stroke="#555" stroke-width="1.2"/><path d="M8.6 7.6c1.5 0 2 1 3 2.6s1.4 2.5 3 2.5M14.6 7.4c-1 0-2 .9-3 2.4s-1.8 2.6-3.2 2.6" fill="none" stroke="#555" stroke-width="1.3"/></svg><div class="r" style="left:250px;top:167px;width:1345px;height:26px;background:#fff;border:1px solid #c6c6c6"></div><div class="t" style="top:174.92px;font-size:12.5px;line-height:12.5px;color:#262626;letter-spacing:0.05px;left:262.5px;">DATA PENDUDUK</div><svg class="r" style="left:1581px;top:178px;" width="10" height="6" viewBox="0 0 10 6"><path d="M1 1l4 4 4-4" fill="none" stroke="#555" stroke-width="1.4"/></svg><div class="r" style="left:25px;top:222px;width:1554px;height:588px;background:#fff"></div><div class="r" style="left:0px;top:203px;width:1580px;height:19px;background:#e6e6e6"></div><div class="r" style="left:25px;top:203px;width:1458px;height:18px;background:#d2d2d2"></div><svg class="r" style="left:10px;top:207px;" width="13" height="13" viewBox="0 0 13 13"><path d="M12.5 0.5V12.5H0.5z" fill="#b9b9b9"/></svg><div class="r" style="left:72px;top:203px;width:1px;height:19px;background:#c6c6c6"></div><div class="r" style="left:219px;top:203px;width:1px;height:19px;background:#c6c6c6"></div><div class="r" style="left:260px;top:203px;width:1px;height:19px;background:#c6c6c6"></div><div class="r" style="left:364px;top:203px;width:1px;height:19px;background:#c6c6c6"></div><div class="r" style="left:471px;top:203px;width:1px;height:19px;background:#c6c6c6"></div><div class="r" style="left:532px;top:203px;width:1px;height:19px;background:#c6c6c6"></div><div class="r" style="left:575px;top:203px;width:1px;height:19px;background:#c6c6c6"></div><div class="r" style="left:623px;top:203px;width:1px;height:19px;background:#c6c6c6"></div><div class="r" style="left:706px;top:203px;width:1px;height:19px;background:#c6c6c6"></div><div class="r" style="left:820px;top:203px;width:1px;height:19px;background:#c6c6c6"></div><div class="r" style="left:936px;top:203px;width:1px;height:19px;background:#c6c6c6"></div><div class="r" style="left:1052px;top:203px;width:1px;height:19px;background:#c6c6c6"></div><div class="r" style="left:1152px;top:203px;width:1px;height:19px;background:#c6c6c6"></div><div class="r" style="left:1258px;top:203px;width:1px;height:19px;background:#c6c6c6"></div><div class="r" style="left:1392px;top:203px;width:1px;height:19px;background:#c6c6c6"></div><div class="r" style="left:1483px;top:203px;width:1px;height:19px;background:#c6c6c6"></div><div class="r" style="left:1545px;top:203px;width:1px;height:19px;background:#c6c6c6"></div><div class="r" style="left:25px;top:203px;width:1px;height:19px;background:#c6c6c6"></div><div class="r" style="left:70px;top:203px;width:1px;height:18px;background:#b0b0b0"></div><div class="r" style="left:71px;top:203px;width:1px;height:18px;background:#e2e2e2"></div><div class="r" style="left:72px;top:203px;width:1px;height:18px;background:#ffffff"></div><div class="r" style="left:73px;top:203px;width:1px;height:18px;background:#e2e2e2"></div><div class="r" style="left:74px;top:203px;width:1px;height:18px;background:#b0b0b0"></div><div class="r" style="left:1483px;top:222px;width:95px;height:1px;background:#ababab"></div><div class="t" style="top:207.42px;font-size:12.5px;line-height:12.5px;color:#217346;left:19.00px;width:60px;text-align:center;">A</div><div class="t" style="top:207.42px;font-size:12.5px;line-height:12.5px;color:#217346;left:116.00px;width:60px;text-align:center;">D</div><div class="t" style="top:207.42px;font-size:12.5px;line-height:12.5px;color:#217346;left:210.00px;width:60px;text-align:center;">E</div><div class="t" style="top:207.42px;font-size:12.5px;line-height:12.5px;color:#217346;left:282.50px;width:60px;text-align:center;">F</div><div class="t" style="top:207.42px;font-size:12.5px;line-height:12.5px;color:#217346;left:388.00px;width:60px;text-align:center;">G</div><div class="t" style="top:207.42px;font-size:12.5px;line-height:12.5px;color:#217346;left:472.00px;width:60px;text-align:center;">H</div><div class="t" style="top:207.42px;font-size:12.5px;line-height:12.5px;color:#217346;left:524.00px;width:60px;text-align:center;">I</div><div class="t" style="top:207.42px;font-size:12.5px;line-height:12.5px;color:#217346;left:569.50px;width:60px;text-align:center;">J</div><div class="t" style="top:207.42px;font-size:12.5px;line-height:12.5px;color:#217346;left:635.00px;width:60px;text-align:center;">K</div><div class="t" style="top:207.42px;font-size:12.5px;line-height:12.5px;color:#217346;left:733.50px;width:60px;text-align:center;">L</div><div class="t" style="top:207.42px;font-size:12.5px;line-height:12.5px;color:#217346;left:848.50px;width:60px;text-align:center;">M</div><div class="t" style="top:207.42px;font-size:12.5px;line-height:12.5px;color:#217346;left:964.50px;width:60px;text-align:center;">N</div><div class="t" style="top:207.42px;font-size:12.5px;line-height:12.5px;color:#217346;left:1072.50px;width:60px;text-align:center;">O</div><div class="t" style="top:207.42px;font-size:12.5px;line-height:12.5px;color:#217346;left:1175.50px;width:60px;text-align:center;">P</div><div class="t" style="top:207.42px;font-size:12.5px;line-height:12.5px;color:#217346;left:1295.50px;width:60px;text-align:center;">Q</div><div class="t" style="top:207.42px;font-size:12.5px;line-height:12.5px;color:#217346;left:1408.00px;width:60px;text-align:center;">R</div><div class="t" style="top:207.42px;font-size:12.5px;line-height:12.5px;color:#262626;left:1484.50px;width:60px;text-align:center;">S</div><div class="r" style="left:1545px;top:203px;width:34px;height:19px;overflow:hidden"><div class="t" style="left:12.0px;top:4.42px;width:40px;text-align:center;font-size:12.5px;line-height:12.5px;color:#262626">T</div></div><div class="r" style="left:0px;top:222px;width:25px;height:588px;background:#e6e6e6"></div><div class="r" style="left:0px;top:222px;width:25px;height:29px;background:#d2d2d2"></div><div class="r" style="left:25px;top:222px;width:1px;height:588px;background:#ababab"></div><div class="r" style="left:0px;top:250px;width:25px;height:1px;background:#b4b4b4"></div><div class="r" style="left:0px;top:278px;width:25px;height:1px;background:#b4b4b4"></div><div class="r" style="left:0px;top:306px;width:25px;height:1px;background:#b4b4b4"></div><div class="r" style="left:0px;top:334px;width:25px;height:1px;background:#b4b4b4"></div><div class="r" style="left:0px;top:369px;width:25px;height:1px;background:#b4b4b4"></div><div class="r" style="left:0px;top:388px;width:25px;height:1px;background:#b4b4b4"></div><div class="r" style="left:0px;top:420px;width:25px;height:1px;background:#b4b4b4"></div><div class="r" style="left:0px;top:452px;width:25px;height:1px;background:#b4b4b4"></div><div class="r" style="left:0px;top:500px;width:25px;height:1px;background:#b4b4b4"></div><div class="r" style="left:0px;top:548px;width:25px;height:1px;background:#b4b4b4"></div><div class="r" style="left:0px;top:580px;width:25px;height:1px;background:#b4b4b4"></div><div class="r" style="left:0px;top:612px;width:25px;height:1px;background:#b4b4b4"></div><div class="r" style="left:0px;top:644px;width:25px;height:1px;background:#b4b4b4"></div><div class="r" style="left:0px;top:692px;width:25px;height:1px;background:#b4b4b4"></div><div class="r" style="left:0px;top:724px;width:25px;height:1px;background:#b4b4b4"></div><div class="r" style="left:0px;top:756px;width:25px;height:1px;background:#b4b4b4"></div><div class="r" style="left:0px;top:788px;width:25px;height:1px;background:#b4b4b4"></div><div class="t" style="top:235.84px;font-size:12px;line-height:12px;color:#217346;left:0.50px;width:24px;text-align:center;">1</div><div class="t" style="top:263.84px;font-size:12px;line-height:12px;color:#262626;left:0.50px;width:24px;text-align:center;">2</div><div class="t" style="top:291.84px;font-size:12px;line-height:12px;color:#262626;left:0.50px;width:24px;text-align:center;">3</div><div class="t" style="top:319.84px;font-size:12px;line-height:12px;color:#262626;left:0.50px;width:24px;text-align:center;">4</div><div class="t" style="top:354.84px;font-size:12px;line-height:12px;color:#262626;left:0.50px;width:24px;text-align:center;">5</div><div class="t" style="top:373.84px;font-size:12px;line-height:12px;color:#262626;left:0.50px;width:24px;text-align:center;">6</div><div class="t" style="top:405.84px;font-size:12px;line-height:12px;color:#262626;left:0.50px;width:24px;text-align:center;">7</div><div class="t" style="top:437.84px;font-size:12px;line-height:12px;color:#262626;left:0.50px;width:24px;text-align:center;">8</div><div class="t" style="top:485.84px;font-size:12px;line-height:12px;color:#262626;left:0.50px;width:24px;text-align:center;">9</div><div class="t" style="top:533.84px;font-size:12px;line-height:12px;color:#262626;left:0.50px;width:24px;text-align:center;">10</div><div class="t" style="top:565.84px;font-size:12px;line-height:12px;color:#262626;left:0.50px;width:24px;text-align:center;">11</div><div class="t" style="top:597.84px;font-size:12px;line-height:12px;color:#262626;left:0.50px;width:24px;text-align:center;">12</div><div class="t" style="top:629.84px;font-size:12px;line-height:12px;color:#262626;left:0.50px;width:24px;text-align:center;">13</div><div class="t" style="top:677.84px;font-size:12px;line-height:12px;color:#262626;left:0.50px;width:24px;text-align:center;">14</div><div class="t" style="top:709.84px;font-size:12px;line-height:12px;color:#262626;left:0.50px;width:24px;text-align:center;">15</div><div class="t" style="top:741.84px;font-size:12px;line-height:12px;color:#262626;left:0.50px;width:24px;text-align:center;">16</div><div class="t" style="top:773.84px;font-size:12px;line-height:12px;color:#262626;left:0.50px;width:24px;text-align:center;">17</div><div class="t" style="top:805.84px;font-size:12px;line-height:12px;color:#262626;left:0.50px;width:24px;text-align:center;">18</div><div class="r" style="left:26px;top:250px;width:1553px;height:1px;background:#d4d4d4"></div><div class="r" style="left:26px;top:278px;width:1553px;height:1px;background:#d4d4d4"></div><div class="r" style="left:26px;top:306px;width:1553px;height:1px;background:#d4d4d4"></div><div class="r" style="left:26px;top:334px;width:1553px;height:1px;background:#d4d4d4"></div><div class="r" style="left:1484px;top:369px;width:95px;height:1px;background:#d4d4d4"></div><div class="r" style="left:1484px;top:388px;width:95px;height:1px;background:#d4d4d4"></div><div class="r" style="left:1484px;top:420px;width:95px;height:1px;background:#d4d4d4"></div><div class="r" style="left:1484px;top:452px;width:95px;height:1px;background:#d4d4d4"></div><div class="r" style="left:1484px;top:500px;width:95px;height:1px;background:#d4d4d4"></div><div class="r" style="left:1484px;top:548px;width:95px;height:1px;background:#d4d4d4"></div><div class="r" style="left:1484px;top:580px;width:95px;height:1px;background:#d4d4d4"></div><div class="r" style="left:1484px;top:612px;width:95px;height:1px;background:#d4d4d4"></div><div class="r" style="left:1484px;top:644px;width:95px;height:1px;background:#d4d4d4"></div><div class="r" style="left:1484px;top:692px;width:95px;height:1px;background:#d4d4d4"></div><div class="r" style="left:1484px;top:724px;width:95px;height:1px;background:#d4d4d4"></div><div class="r" style="left:1484px;top:756px;width:95px;height:1px;background:#d4d4d4"></div><div class="r" style="left:1484px;top:788px;width:95px;height:1px;background:#d4d4d4"></div><div class="r" style="left:72px;top:306px;width:1px;height:28px;background:#d4d4d4"></div><div class="r" style="left:219px;top:306px;width:1px;height:28px;background:#d4d4d4"></div><div class="r" style="left:260px;top:306px;width:1px;height:28px;background:#d4d4d4"></div><div class="r" style="left:364px;top:306px;width:1px;height:28px;background:#d4d4d4"></div><div class="r" style="left:471px;top:306px;width:1px;height:28px;background:#d4d4d4"></div><div class="r" style="left:532px;top:306px;width:1px;height:28px;background:#d4d4d4"></div><div class="r" style="left:575px;top:306px;width:1px;height:28px;background:#d4d4d4"></div><div class="r" style="left:623px;top:306px;width:1px;height:28px;background:#d4d4d4"></div><div class="r" style="left:706px;top:306px;width:1px;height:28px;background:#d4d4d4"></div><div class="r" style="left:820px;top:306px;width:1px;height:28px;background:#d4d4d4"></div><div class="r" style="left:936px;top:306px;width:1px;height:28px;background:#d4d4d4"></div><div class="r" style="left:1052px;top:306px;width:1px;height:28px;background:#d4d4d4"></div><div class="r" style="left:1152px;top:306px;width:1px;height:28px;background:#d4d4d4"></div><div class="r" style="left:1258px;top:306px;width:1px;height:28px;background:#d4d4d4"></div><div class="r" style="left:1392px;top:306px;width:1px;height:28px;background:#d4d4d4"></div><div class="r" style="left:1483px;top:306px;width:1px;height:28px;background:#d4d4d4"></div><div class="r" style="left:1545px;top:222px;width:1px;height:588px;background:#d4d4d4"></div><div class="r" style="left:1483px;top:250px;width:1px;height:560px;background:#d4d4d4"></div><div class="r" style="left:25px;top:334px;width:1459px;height:1px;background:#000"></div><div class="r" style="left:25px;top:369px;width:1459px;height:1px;background:#000"></div><div class="r" style="left:25px;top:388px;width:1459px;height:1px;background:#000"></div><div class="r" style="left:25px;top:420px;width:1459px;height:1px;background:#000"></div><div class="r" style="left:25px;top:452px;width:1459px;height:1px;background:#000"></div><div class="r" style="left:25px;top:500px;width:1459px;height:1px;background:#000"></div><div class="r" style="left:25px;top:548px;width:1459px;height:1px;background:#000"></div><div class="r" style="left:25px;top:580px;width:1459px;height:1px;background:#000"></div><div class="r" style="left:25px;top:612px;width:1459px;height:1px;background:#000"></div><div class="r" style="left:25px;top:644px;width:1459px;height:1px;background:#000"></div><div class="r" style="left:25px;top:692px;width:1459px;height:1px;background:#000"></div><div class="r" style="left:25px;top:724px;width:1459px;height:1px;background:#000"></div><div class="r" style="left:25px;top:756px;width:1459px;height:1px;background:#000"></div><div class="r" style="left:25px;top:788px;width:1459px;height:1px;background:#000"></div><div class="r" style="left:72px;top:334px;width:1px;height:476px;background:#000"></div><div class="r" style="left:219px;top:334px;width:1px;height:476px;background:#000"></div><div class="r" style="left:260px;top:334px;width:1px;height:476px;background:#000"></div><div class="r" style="left:364px;top:334px;width:1px;height:476px;background:#000"></div><div class="r" style="left:471px;top:334px;width:1px;height:476px;background:#000"></div><div class="r" style="left:532px;top:334px;width:1px;height:476px;background:#000"></div><div class="r" style="left:575px;top:334px;width:1px;height:476px;background:#000"></div><div class="r" style="left:623px;top:334px;width:1px;height:476px;background:#000"></div><div class="r" style="left:706px;top:334px;width:1px;height:476px;background:#000"></div><div class="r" style="left:820px;top:334px;width:1px;height:476px;background:#000"></div><div class="r" style="left:936px;top:334px;width:1px;height:476px;background:#000"></div><div class="r" style="left:1052px;top:334px;width:1px;height:476px;background:#000"></div><div class="r" style="left:1152px;top:334px;width:1px;height:476px;background:#000"></div><div class="r" style="left:1258px;top:334px;width:1px;height:476px;background:#000"></div><div class="r" style="left:1392px;top:334px;width:1px;height:476px;background:#000"></div><div class="r" style="left:1483px;top:334px;width:1px;height:476px;background:#000"></div><div class="t" style="top:229.65px;font-size:14px;line-height:14px;color:#000;font-weight:700;letter-spacing:-0.1px;left:454.50px;width:600px;text-align:center;">DATA PENDUDUK</div><div class="t" style="top:257.65px;font-size:14px;line-height:14px;color:#000;font-weight:700;letter-spacing:-0.31px;left:454.50px;width:600px;text-align:center;">LINGKUNGAN PEKANDELAN, KELURAHAN KARANGASEM</div><div class="t" style="top:285.65px;font-size:14px;line-height:14px;color:#000;font-weight:700;letter-spacing:0.25px;left:454.50px;width:600px;text-align:center;">TAHUN 2024</div><div class="t" style="top:346.14px;font-size:12px;line-height:12px;color:#000;font-weight:700;letter-spacing:-0.33px;left:5.50px;width:87px;text-align:center;">NO</div><div class="t" style="top:346.14px;font-size:12px;line-height:12px;color:#000;font-weight:700;letter-spacing:-0.33px;left:52.50px;width:187px;text-align:center;">NAMA</div><div class="t" style="top:346.14px;font-size:12px;line-height:12px;color:#000;font-weight:700;letter-spacing:-0.33px;left:199.50px;width:81px;text-align:center;">JK</div><div class="t" style="top:346.14px;font-size:12px;line-height:12px;color:#000;font-weight:700;letter-spacing:-0.283px;left:240.50px;width:144px;text-align:center;">TMPT LHR</div><div class="t" style="top:346.14px;font-size:12px;line-height:12px;color:#000;font-weight:700;letter-spacing:-0.276px;left:344.50px;width:147px;text-align:center;">TGL LHR</div><div class="t" style="top:338.14px;font-size:12px;line-height:12px;color:#000;font-weight:700;letter-spacing:-0.33px;left:451.50px;width:101px;text-align:center;">UMUR</div><div class="t" style="top:354.14px;font-size:12px;line-height:12px;color:#000;font-weight:700;letter-spacing:-0.221px;left:451.50px;width:101px;text-align:center;">(TAHUN)</div><div class="t" style="top:346.14px;font-size:12px;line-height:12px;color:#000;font-weight:700;letter-spacing:-0.33px;left:512.50px;width:83px;text-align:center;">GDR</div><div class="t" style="top:346.14px;font-size:12px;line-height:12px;color:#000;font-weight:700;letter-spacing:-0.33px;left:555.50px;width:88px;text-align:center;">AGAMA</div><div class="t" style="top:346.14px;font-size:12px;line-height:12px;color:#000;font-weight:700;letter-spacing:-0.33px;left:603.50px;width:123px;text-align:center;">STATUS</div><div class="t" style="top:346.14px;font-size:12px;line-height:12px;color:#000;font-weight:700;letter-spacing:-0.33px;left:686.50px;width:154px;text-align:center;">SHDK</div><div class="t" style="top:346.14px;font-size:12px;line-height:12px;color:#000;font-weight:700;letter-spacing:-0.33px;left:800.50px;width:156px;text-align:center;">PENDIDIKAN</div><div class="t" style="top:346.14px;font-size:12px;line-height:12px;color:#000;font-weight:700;letter-spacing:-0.33px;left:916.50px;width:156px;text-align:center;">PEKERJAAN</div><div class="t" style="top:346.14px;font-size:12px;line-height:12px;color:#000;font-weight:700;letter-spacing:-0.283px;left:1032.50px;width:140px;text-align:center;">NAMA IBU</div><div class="t" style="top:346.14px;font-size:12px;line-height:12px;color:#000;font-weight:700;letter-spacing:-0.288px;left:1132.50px;width:146px;text-align:center;">NAMA AYAH</div><div class="t" style="top:346.14px;font-size:12px;line-height:12px;color:#000;font-weight:700;letter-spacing:-0.33px;left:1238.50px;width:174px;text-align:center;">ALAMAT</div><div class="t" style="top:346.14px;font-size:12px;line-height:12px;color:#000;font-weight:700;letter-spacing:-0.254px;left:1372.50px;width:131px;text-align:center;">NO TELP/WA</div><div class="t" style="top:373.14px;font-size:12px;line-height:12px;color:#000;font-weight:700;letter-spacing:0.2px;left:5.50px;width:87px;text-align:center;">1</div><div class="r" style="left:55px;top:370px;width:17px;height:17px;border:1px solid #c3c7ce;background:linear-gradient(#fbfcfd,#e9ecf0)"></div><svg class="r" style="left:60px;top:377px;" width="8" height="5" viewBox="0 0 8 5"><path d="M0 0h8L4 4.5z" fill="#6d6d6d"/></svg><div class="t" style="top:373.14px;font-size:12px;line-height:12px;color:#000;font-weight:700;letter-spacing:0.2px;left:52.50px;width:187px;text-align:center;">4</div><div class="r" style="left:202px;top:370px;width:17px;height:17px;border:1px solid #c3c7ce;background:linear-gradient(#fbfcfd,#e9ecf0)"></div><svg class="r" style="left:207px;top:377px;" width="8" height="5" viewBox="0 0 8 5"><path d="M0 0h8L4 4.5z" fill="#6d6d6d"/></svg><div class="t" style="top:373.14px;font-size:12px;line-height:12px;color:#000;font-weight:700;letter-spacing:0.2px;left:199.50px;width:81px;text-align:center;">5</div><div class="r" style="left:243px;top:370px;width:17px;height:17px;border:1px solid #c3c7ce;background:linear-gradient(#fbfcfd,#e9ecf0)"></div><svg class="r" style="left:248px;top:377px;" width="8" height="5" viewBox="0 0 8 5"><path d="M0 0h8L4 4.5z" fill="#6d6d6d"/></svg><div class="t" style="top:373.14px;font-size:12px;line-height:12px;color:#000;font-weight:700;letter-spacing:0.2px;left:240.50px;width:144px;text-align:center;">6</div><div class="r" style="left:347px;top:370px;width:17px;height:17px;border:1px solid #c3c7ce;background:linear-gradient(#fbfcfd,#e9ecf0)"></div><svg class="r" style="left:352px;top:377px;" width="8" height="5" viewBox="0 0 8 5"><path d="M0 0h8L4 4.5z" fill="#6d6d6d"/></svg><div class="t" style="top:373.14px;font-size:12px;line-height:12px;color:#000;font-weight:700;letter-spacing:0.2px;left:344.50px;width:147px;text-align:center;">7</div><div class="r" style="left:454px;top:370px;width:17px;height:17px;border:1px solid #c3c7ce;background:linear-gradient(#fbfcfd,#e9ecf0)"></div><svg class="r" style="left:459px;top:377px;" width="8" height="5" viewBox="0 0 8 5"><path d="M0 0h8L4 4.5z" fill="#6d6d6d"/></svg><div class="t" style="top:373.14px;font-size:12px;line-height:12px;color:#000;font-weight:700;letter-spacing:0.2px;left:451.50px;width:101px;text-align:center;">8</div><div class="r" style="left:515px;top:370px;width:17px;height:17px;border:1px solid #c3c7ce;background:linear-gradient(#fbfcfd,#e9ecf0)"></div><svg class="r" style="left:520px;top:377px;" width="8" height="5" viewBox="0 0 8 5"><path d="M0 0h8L4 4.5z" fill="#6d6d6d"/></svg><div class="t" style="top:373.14px;font-size:12px;line-height:12px;color:#000;font-weight:700;letter-spacing:0.2px;left:512.50px;width:83px;text-align:center;">9</div><div class="r" style="left:558px;top:370px;width:17px;height:17px;border:1px solid #c3c7ce;background:linear-gradient(#fbfcfd,#e9ecf0)"></div><svg class="r" style="left:563px;top:377px;" width="8" height="5" viewBox="0 0 8 5"><path d="M0 0h8L4 4.5z" fill="#6d6d6d"/></svg><div class="t" style="top:373.14px;font-size:12px;line-height:12px;color:#000;font-weight:700;letter-spacing:0.2px;left:555.50px;width:88px;text-align:center;">10</div><div class="r" style="left:606px;top:370px;width:17px;height:17px;border:1px solid #c3c7ce;background:linear-gradient(#fbfcfd,#e9ecf0)"></div><svg class="r" style="left:611px;top:377px;" width="8" height="5" viewBox="0 0 8 5"><path d="M0 0h8L4 4.5z" fill="#6d6d6d"/></svg><div class="t" style="top:373.14px;font-size:12px;line-height:12px;color:#000;font-weight:700;letter-spacing:0.2px;left:603.50px;width:123px;text-align:center;">11</div><div class="r" style="left:689px;top:370px;width:17px;height:17px;border:1px solid #c3c7ce;background:linear-gradient(#fbfcfd,#e9ecf0)"></div><svg class="r" style="left:694px;top:377px;" width="8" height="5" viewBox="0 0 8 5"><path d="M0 0h8L4 4.5z" fill="#6d6d6d"/></svg><div class="t" style="top:373.14px;font-size:12px;line-height:12px;color:#000;font-weight:700;letter-spacing:0.2px;left:686.50px;width:154px;text-align:center;">12</div><div class="r" style="left:803px;top:370px;width:17px;height:17px;border:1px solid #c3c7ce;background:linear-gradient(#fbfcfd,#e9ecf0)"></div><svg class="r" style="left:808px;top:377px;" width="8" height="5" viewBox="0 0 8 5"><path d="M0 0h8L4 4.5z" fill="#6d6d6d"/></svg><div class="t" style="top:373.14px;font-size:12px;line-height:12px;color:#000;font-weight:700;letter-spacing:0.2px;left:800.50px;width:156px;text-align:center;">13</div><div class="r" style="left:919px;top:370px;width:17px;height:17px;border:1px solid #c3c7ce;background:linear-gradient(#fbfcfd,#e9ecf0)"></div><svg class="r" style="left:924px;top:377px;" width="8" height="5" viewBox="0 0 8 5"><path d="M0 0h8L4 4.5z" fill="#6d6d6d"/></svg><div class="t" style="top:373.14px;font-size:12px;line-height:12px;color:#000;font-weight:700;letter-spacing:0.2px;left:916.50px;width:156px;text-align:center;">14</div><div class="r" style="left:1035px;top:370px;width:17px;height:17px;border:1px solid #c3c7ce;background:linear-gradient(#fbfcfd,#e9ecf0)"></div><svg class="r" style="left:1040px;top:377px;" width="8" height="5" viewBox="0 0 8 5"><path d="M0 0h8L4 4.5z" fill="#6d6d6d"/></svg><div class="t" style="top:373.14px;font-size:12px;line-height:12px;color:#000;font-weight:700;letter-spacing:0.2px;left:1032.50px;width:140px;text-align:center;">15</div><div class="r" style="left:1135px;top:370px;width:17px;height:17px;border:1px solid #c3c7ce;background:linear-gradient(#fbfcfd,#e9ecf0)"></div><svg class="r" style="left:1140px;top:377px;" width="8" height="5" viewBox="0 0 8 5"><path d="M0 0h8L4 4.5z" fill="#6d6d6d"/></svg><div class="t" style="top:373.14px;font-size:12px;line-height:12px;color:#000;font-weight:700;letter-spacing:0.2px;left:1132.50px;width:146px;text-align:center;">16</div><div class="r" style="left:1241px;top:370px;width:17px;height:17px;border:1px solid #c3c7ce;background:linear-gradient(#fbfcfd,#e9ecf0)"></div><svg class="r" style="left:1246px;top:377px;" width="8" height="5" viewBox="0 0 8 5"><path d="M0 0h8L4 4.5z" fill="#6d6d6d"/></svg><div class="t" style="top:373.14px;font-size:12px;line-height:12px;color:#000;font-weight:700;letter-spacing:0.2px;left:1238.50px;width:174px;text-align:center;">17</div><div class="r" style="left:1375px;top:370px;width:17px;height:17px;border:1px solid #c3c7ce;background:linear-gradient(#fbfcfd,#e9ecf0)"></div><svg class="r" style="left:1380px;top:377px;" width="8" height="5" viewBox="0 0 8 5"><path d="M0 0h8L4 4.5z" fill="#6d6d6d"/></svg><div class="t" style="top:373.14px;font-size:12px;line-height:12px;color:#000;font-weight:700;letter-spacing:0.2px;left:1372.50px;width:131px;text-align:center;">18</div><div class="r" style="left:1466px;top:370px;width:17px;height:17px;border:1px solid #c3c7ce;background:linear-gradient(#fbfcfd,#e9ecf0)"></div><svg class="r" style="left:1471px;top:377px;" width="8" height="5" viewBox="0 0 8 5"><path d="M0 0h8L4 4.5z" fill="#6d6d6d"/></svg><div class="r" style="left:0;top:0;width:1579px;height:810px;overflow:hidden"><div class="t" style="top:398.64px;font-size:12px;line-height:12px;color:#000;letter-spacing:0.2px;left:5.50px;width:87px;text-align:center;">1</div><div class="t" style="top:398.64px;font-size:12px;line-height:12px;color:#000;letter-spacing:-0.172px;left:75px;">PUTU DOANTARA YASA</div><div class="t" style="top:398.64px;font-size:12px;line-height:12px;color:#000;letter-spacing:-0.2px;left:199.50px;width:81px;text-align:center;">L</div><div class="t" style="top:398.64px;font-size:12px;line-height:12px;color:#000;letter-spacing:-0.2px;left:263px;">AMLAPURA</div><div class="t" style="top:398.64px;font-size:12px;line-height:12px;color:#000;letter-spacing:-0.13px;left:344.50px;width:147px;text-align:center;">###############</div><div class="t" style="top:398.64px;font-size:12px;line-height:12px;color:#000;letter-spacing:0.2px;left:451.50px;width:101px;text-align:center;">38</div><div class="t" style="top:398.64px;font-size:12px;line-height:12px;color:#000;letter-spacing:-0.2px;left:512.50px;width:83px;text-align:center;">B</div><div class="t" style="top:398.64px;font-size:12px;line-height:12px;color:#000;letter-spacing:0.176px;left:578px;">Hindu</div><div class="t" style="top:398.64px;font-size:12px;line-height:12px;color:#000;letter-spacing:0.176px;left:626px;">Kawin</div><div class="t" style="top:398.64px;font-size:12px;line-height:12px;color:#000;letter-spacing:0.193px;left:709px;">Kepala Keluarga</div><div class="t" style="top:390.64px;font-size:12px;line-height:12px;color:#000;letter-spacing:0.181px;left:823px;">Tamat Diploma</div><div class="t" style="top:406.64px;font-size:12px;line-height:12px;color:#000;letter-spacing:0.059px;left:823px;">IV/Strata I</div><div class="t" style="top:390.64px;font-size:12px;line-height:12px;color:#000;letter-spacing:0.173px;left:939px;">Guru Sekolah</div><div class="t" style="top:406.64px;font-size:12px;line-height:12px;color:#000;letter-spacing:0.192px;left:939px;">Swasta</div><div class="t" style="top:398.64px;font-size:12px;line-height:12px;color:#000;letter-spacing:0.05px;left:1055px;">-</div><div class="t" style="top:390.64px;font-size:12px;line-height:12px;color:#000;letter-spacing:-0.164px;left:1155px;">I WAYAN</div><div class="t" style="top:406.64px;font-size:12px;line-height:12px;color:#000;letter-spacing:-0.2px;left:1155px;">SANTOSA</div><div class="t" style="top:398.64px;font-size:12px;line-height:12px;color:#000;letter-spacing:-0.171px;left:1261px;">LINGK. PEKANDELAN</div><div class="t" style="top:398.64px;font-size:12px;line-height:12px;color:#000;letter-spacing:0.2px;left:1395px;">081805367894</div><div class="t" style="top:430.64px;font-size:12px;line-height:12px;color:#000;letter-spacing:0.2px;left:5.50px;width:87px;text-align:center;">2</div><div class="t" style="top:422.64px;font-size:12px;line-height:12px;color:#000;letter-spacing:-0.158px;left:75px;">NI KETUT ARY</div><div class="t" style="top:438.64px;font-size:12px;line-height:12px;color:#000;letter-spacing:-0.169px;left:75px;">PRISMAWATHI,S.PD</div><div class="t" style="top:430.64px;font-size:12px;line-height:12px;color:#000;letter-spacing:-0.2px;left:199.50px;width:81px;text-align:center;">P</div><div class="t" style="top:430.64px;font-size:12px;line-height:12px;color:#000;letter-spacing:-0.2px;left:263px;">AMLAPURA</div><div class="t" style="top:430.64px;font-size:12px;line-height:12px;color:#000;letter-spacing:-0.13px;left:344.50px;width:147px;text-align:center;">###############</div><div class="t" style="top:430.64px;font-size:12px;line-height:12px;color:#000;letter-spacing:0.2px;left:451.50px;width:101px;text-align:center;">42</div><div class="t" style="top:430.64px;font-size:12px;line-height:12px;color:#000;letter-spacing:-0.2px;left:512.50px;width:83px;text-align:center;">B</div><div class="t" style="top:430.64px;font-size:12px;line-height:12px;color:#000;letter-spacing:0.176px;left:578px;">Hindu</div><div class="t" style="top:430.64px;font-size:12px;line-height:12px;color:#000;letter-spacing:0.176px;left:626px;">Kawin</div><div class="t" style="top:430.64px;font-size:12px;line-height:12px;color:#000;letter-spacing:0.176px;left:709px;">Istri</div><div class="t" style="top:422.64px;font-size:12px;line-height:12px;color:#000;letter-spacing:0.181px;left:823px;">Tamat Diploma</div><div class="t" style="top:438.64px;font-size:12px;line-height:12px;color:#000;letter-spacing:0.059px;left:823px;">IV/Strata I</div><div class="t" style="top:422.64px;font-size:12px;line-height:12px;color:#000;letter-spacing:0.173px;left:939px;">Guru Sekolah</div><div class="t" style="top:438.64px;font-size:12px;line-height:12px;color:#000;letter-spacing:0.192px;left:939px;">Swasta</div><div class="t" style="top:430.64px;font-size:12px;line-height:12px;color:#000;letter-spacing:0.05px;left:1055px;">-</div><div class="t" style="top:430.64px;font-size:12px;line-height:12px;color:#000;letter-spacing:-0.164px;left:1155px;">I WAYAN BADUNG</div><div class="t" style="top:430.64px;font-size:12px;line-height:12px;color:#000;letter-spacing:-0.171px;left:1261px;">LINGK. PEKANDELAN</div><div class="t" style="top:470.64px;font-size:12px;line-height:12px;color:#000;letter-spacing:0.2px;left:5.50px;width:87px;text-align:center;">3</div><div class="t" style="top:462.64px;font-size:12px;line-height:12px;color:#000;letter-spacing:-0.179px;left:75px;">PUTU NANDARY</div><div class="t" style="top:478.64px;font-size:12px;line-height:12px;color:#000;letter-spacing:-0.2px;left:75px;">SESANA</div><div class="t" style="top:470.64px;font-size:12px;line-height:12px;color:#000;letter-spacing:-0.2px;left:199.50px;width:81px;text-align:center;">P</div><div class="t" style="top:470.64px;font-size:12px;line-height:12px;color:#000;letter-spacing:-0.2px;left:263px;">AMLAPURA</div><div class="t" style="top:470.64px;font-size:12px;line-height:12px;color:#000;letter-spacing:-0.13px;left:344.50px;width:147px;text-align:center;">###############</div><div class="t" style="top:470.64px;font-size:12px;line-height:12px;color:#000;letter-spacing:0.2px;left:451.50px;width:101px;text-align:center;">12</div><div class="t" style="top:470.64px;font-size:12px;line-height:12px;color:#000;letter-spacing:0.05px;left:512.50px;width:83px;text-align:center;">-</div><div class="t" style="top:470.64px;font-size:12px;line-height:12px;color:#000;letter-spacing:0.176px;left:578px;">Hindu</div><div class="t" style="top:470.64px;font-size:12px;line-height:12px;color:#000;letter-spacing:0.165px;left:626px;">Belum Kawin</div><div class="t" style="top:470.64px;font-size:12px;line-height:12px;color:#000;letter-spacing:0.153px;left:709px;">Anak</div><div class="t" style="top:470.64px;font-size:12px;line-height:12px;color:#000;letter-spacing:0.134px;left:823px;">SD/Sederajat</div><div class="t" style="top:470.64px;font-size:12px;line-height:12px;color:#000;letter-spacing:0.202px;left:939px;">Pelajar/Mahasiswa</div><div class="t" style="top:454.64px;font-size:12px;line-height:12px;color:#000;letter-spacing:-0.158px;left:1055px;">NI KETUT ARY</div><div class="t" style="top:470.64px;font-size:12px;line-height:12px;color:#000;letter-spacing:-0.164px;left:1055px;">PRISMAWATHI,S.</div><div class="t" style="top:486.64px;font-size:12px;line-height:12px;color:#000;letter-spacing:-0.2px;left:1055px;">PD</div><div class="t" style="top:462.64px;font-size:12px;line-height:12px;color:#000;letter-spacing:-0.181px;left:1155px;">PUTU DOANTARA</div><div class="t" style="top:478.64px;font-size:12px;line-height:12px;color:#000;letter-spacing:-0.2px;left:1155px;">YASA</div><div class="t" style="top:470.64px;font-size:12px;line-height:12px;color:#000;letter-spacing:-0.171px;left:1261px;">LINGK. PEKANDELAN</div><div class="t" style="top:518.64px;font-size:12px;line-height:12px;color:#000;letter-spacing:0.2px;left:5.50px;width:87px;text-align:center;">4</div><div class="t" style="top:518.64px;font-size:12px;line-height:12px;color:#000;letter-spacing:-0.171px;left:75px;">PUTU IKA DIRAYASA</div><div class="t" style="top:518.64px;font-size:12px;line-height:12px;color:#000;letter-spacing:-0.2px;left:199.50px;width:81px;text-align:center;">P</div><div class="t" style="top:518.64px;font-size:12px;line-height:12px;color:#000;letter-spacing:-0.2px;left:263px;">KARANGASEM</div><div class="t" style="top:518.64px;font-size:12px;line-height:12px;color:#000;letter-spacing:-0.13px;left:344.50px;width:147px;text-align:center;">###############</div><div class="t" style="top:518.64px;font-size:12px;line-height:12px;color:#000;letter-spacing:0.2px;left:451.50px;width:101px;text-align:center;">10</div><div class="t" style="top:518.64px;font-size:12px;line-height:12px;color:#000;letter-spacing:0.05px;left:512.50px;width:83px;text-align:center;">-</div><div class="t" style="top:518.64px;font-size:12px;line-height:12px;color:#000;letter-spacing:0.176px;left:578px;">Hindu</div><div class="t" style="top:518.64px;font-size:12px;line-height:12px;color:#000;letter-spacing:0.165px;left:626px;">Belum Kawin</div><div class="t" style="top:518.64px;font-size:12px;line-height:12px;color:#000;letter-spacing:0.153px;left:709px;">Anak</div><div class="t" style="top:518.64px;font-size:12px;line-height:12px;color:#000;letter-spacing:0.134px;left:823px;">SD/Sederajat</div><div class="t" style="top:518.64px;font-size:12px;line-height:12px;color:#000;letter-spacing:0.202px;left:939px;">Pelajar/Mahasiswa</div><div class="t" style="top:502.64px;font-size:12px;line-height:12px;color:#000;letter-spacing:-0.158px;left:1055px;">NI KETUT ARY</div><div class="t" style="top:518.64px;font-size:12px;line-height:12px;color:#000;letter-spacing:-0.164px;left:1055px;">PRISMAWATHI,S.</div><div class="t" style="top:534.64px;font-size:12px;line-height:12px;color:#000;letter-spacing:-0.2px;left:1055px;">PD</div><div class="t" style="top:510.64px;font-size:12px;line-height:12px;color:#000;letter-spacing:-0.181px;left:1155px;">PUTU DOANTARA</div><div class="t" style="top:526.64px;font-size:12px;line-height:12px;color:#000;letter-spacing:-0.2px;left:1155px;">YASA</div><div class="t" style="top:518.64px;font-size:12px;line-height:12px;color:#000;letter-spacing:-0.171px;left:1261px;">LINGK. PEKANDELAN</div><div class="t" style="top:558.64px;font-size:12px;line-height:12px;color:#000;letter-spacing:0.2px;left:5.50px;width:87px;text-align:center;">5</div><div class="t" style="top:550.64px;font-size:12px;line-height:12px;color:#000;letter-spacing:-0.158px;left:75px;">I WAYAN AGUS PUTRA</div><div class="t" style="top:566.64px;font-size:12px;line-height:12px;color:#000;letter-spacing:-0.2px;left:75px;">WARDANA</div><div class="t" style="top:558.64px;font-size:12px;line-height:12px;color:#000;letter-spacing:-0.2px;left:199.50px;width:81px;text-align:center;">L</div><div class="t" style="top:558.64px;font-size:12px;line-height:12px;color:#000;letter-spacing:-0.2px;left:263px;">AMLAPURA</div><div class="t" style="top:558.64px;font-size:12px;line-height:12px;color:#000;letter-spacing:-0.13px;left:344.50px;width:147px;text-align:center;">###############</div><div class="t" style="top:558.64px;font-size:12px;line-height:12px;color:#000;letter-spacing:0.2px;left:451.50px;width:101px;text-align:center;">46</div><div class="t" style="top:558.64px;font-size:12px;line-height:12px;color:#000;letter-spacing:0.05px;left:512.50px;width:83px;text-align:center;">-</div><div class="t" style="top:558.64px;font-size:12px;line-height:12px;color:#000;letter-spacing:0.176px;left:578px;">Hindu</div><div class="t" style="top:558.64px;font-size:12px;line-height:12px;color:#000;letter-spacing:0.176px;left:626px;">Kawin</div><div class="t" style="top:558.64px;font-size:12px;line-height:12px;color:#000;letter-spacing:0.193px;left:709px;">Kepala Keluarga</div><div class="t" style="top:550.64px;font-size:12px;line-height:12px;color:#000;letter-spacing:0.181px;left:823px;">Tamat Diploma</div><div class="t" style="top:566.64px;font-size:12px;line-height:12px;color:#000;letter-spacing:0.059px;left:823px;">IV/Strata I</div><div class="t" style="top:558.64px;font-size:12px;line-height:12px;color:#000;letter-spacing:0.072px;left:939px;">Karyawan BUMN</div><div class="t" style="top:550.64px;font-size:12px;line-height:12px;color:#000;letter-spacing:-0.172px;left:1055px;">NI NENGAH</div><div class="t" style="top:566.64px;font-size:12px;line-height:12px;color:#000;letter-spacing:-0.2px;left:1055px;">NGANTI</div><div class="t" style="top:550.64px;font-size:12px;line-height:12px;color:#000;letter-spacing:-0.158px;left:1155px;">I MADE</div><div class="t" style="top:566.64px;font-size:12px;line-height:12px;color:#000;letter-spacing:-0.2px;left:1155px;">KUMBAYANA</div><div class="t" style="top:558.64px;font-size:12px;line-height:12px;color:#000;letter-spacing:-0.171px;left:1261px;">LINGK. PEKANDELAN</div><div class="t" style="top:590.64px;font-size:12px;line-height:12px;color:#000;letter-spacing:0.2px;left:5.50px;width:87px;text-align:center;">6</div><div class="t" style="top:590.64px;font-size:12px;line-height:12px;color:#000;letter-spacing:-0.164px;left:75px;">NI NYOMAN SRI ARIATHI</div><div class="t" style="top:590.64px;font-size:12px;line-height:12px;color:#000;letter-spacing:-0.2px;left:199.50px;width:81px;text-align:center;">P</div><div class="t" style="top:590.64px;font-size:12px;line-height:12px;color:#000;letter-spacing:-0.2px;left:263px;">AMLAPURA</div><div class="t" style="top:590.64px;font-size:12px;line-height:12px;color:#000;letter-spacing:-0.13px;left:344.50px;width:147px;text-align:center;">###############</div><div class="t" style="top:590.64px;font-size:12px;line-height:12px;color:#000;letter-spacing:0.2px;left:451.50px;width:101px;text-align:center;">44</div><div class="t" style="top:590.64px;font-size:12px;line-height:12px;color:#000;letter-spacing:0.05px;left:512.50px;width:83px;text-align:center;">-</div><div class="t" style="top:590.64px;font-size:12px;line-height:12px;color:#000;letter-spacing:0.176px;left:578px;">Hindu</div><div class="t" style="top:590.64px;font-size:12px;line-height:12px;color:#000;letter-spacing:0.176px;left:626px;">Kawin</div><div class="t" style="top:590.64px;font-size:12px;line-height:12px;color:#000;letter-spacing:0.176px;left:709px;">Istri</div><div class="t" style="top:582.64px;font-size:12px;line-height:12px;color:#000;letter-spacing:0.181px;left:823px;">Tamat Diploma</div><div class="t" style="top:598.64px;font-size:12px;line-height:12px;color:#000;letter-spacing:-0.137px;left:823px;">I/II/III</div><div class="t" style="top:590.64px;font-size:12px;line-height:12px;color:#000;letter-spacing:0.193px;left:939px;">Karyawan Swasta</div><div class="t" style="top:582.64px;font-size:12px;line-height:12px;color:#000;letter-spacing:-0.172px;left:1055px;">NI NYOMAN</div><div class="t" style="top:598.64px;font-size:12px;line-height:12px;color:#000;letter-spacing:-0.2px;left:1055px;">SURIATI</div><div class="t" style="top:582.64px;font-size:12px;line-height:12px;color:#000;letter-spacing:-0.162px;left:1155px;">I NYOMAN ALIT</div><div class="t" style="top:598.64px;font-size:12px;line-height:12px;color:#000;letter-spacing:-0.142px;left:1155px;">ARTHANA (ALM)</div><div class="t" style="top:590.64px;font-size:12px;line-height:12px;color:#000;letter-spacing:-0.171px;left:1261px;">LINGK. PEKANDELAN</div><div class="t" style="top:622.64px;font-size:12px;line-height:12px;color:#000;letter-spacing:0.2px;left:5.50px;width:87px;text-align:center;">7</div><div class="t" style="top:622.64px;font-size:12px;line-height:12px;color:#000;letter-spacing:-0.163px;left:75px;">I NYOMAN ALIT SUSENA</div><div class="t" style="top:622.64px;font-size:12px;line-height:12px;color:#000;letter-spacing:-0.2px;left:199.50px;width:81px;text-align:center;">L</div><div class="t" style="top:622.64px;font-size:12px;line-height:12px;color:#000;letter-spacing:-0.2px;left:263px;">AMLAPURA</div><div class="t" style="top:622.64px;font-size:12px;line-height:12px;color:#000;letter-spacing:-0.13px;left:344.50px;width:147px;text-align:center;">###############</div><div class="t" style="top:622.64px;font-size:12px;line-height:12px;color:#000;letter-spacing:0.2px;left:451.50px;width:101px;text-align:center;">69</div><div class="t" style="top:622.64px;font-size:12px;line-height:12px;color:#000;letter-spacing:0.05px;left:512.50px;width:83px;text-align:center;">-</div><div class="t" style="top:622.64px;font-size:12px;line-height:12px;color:#000;letter-spacing:0.176px;left:578px;">Hindu</div><div class="t" style="top:622.64px;font-size:12px;line-height:12px;color:#000;letter-spacing:0.165px;left:626px;">Cerai Hidup</div><div class="t" style="top:622.64px;font-size:12px;line-height:12px;color:#000;letter-spacing:0.193px;left:709px;">Kepala Keluarga</div><div class="t" style="top:614.64px;font-size:12px;line-height:12px;color:#000;letter-spacing:0.176px;left:823px;">Tamat</div><div class="t" style="top:630.64px;font-size:12px;line-height:12px;color:#000;letter-spacing:0.086px;left:823px;">SLTA/Sederajat</div><div class="t" style="top:622.64px;font-size:12px;line-height:12px;color:#000;letter-spacing:0.218px;left:939px;">Pensiunan</div><div class="t" style="top:614.64px;font-size:12px;line-height:12px;color:#000;letter-spacing:-0.172px;left:1055px;">NI NYOMAN</div><div class="t" style="top:630.64px;font-size:12px;line-height:12px;color:#000;letter-spacing:-0.2px;left:1055px;">PUTU</div><div class="t" style="top:622.64px;font-size:12px;line-height:12px;color:#000;letter-spacing:-0.158px;left:1155px;">I WAYAN RAKA</div><div class="t" style="top:614.64px;font-size:12px;line-height:12px;color:#000;letter-spacing:0.156px;left:1261px;">Lingk. Pekandelan, Jl.</div><div class="t" style="top:630.64px;font-size:12px;line-height:12px;color:#000;letter-spacing:0.145px;left:1261px;">Sultan Agung No. 101</div><div class="t" style="top:662.64px;font-size:12px;line-height:12px;color:#000;letter-spacing:0.2px;left:5.50px;width:87px;text-align:center;">8</div><div class="t" style="top:662.64px;font-size:12px;line-height:12px;color:#000;letter-spacing:-0.161px;left:75px;">NI PUTU YUNI ARTINI</div><div class="t" style="top:662.64px;font-size:12px;line-height:12px;color:#000;letter-spacing:-0.2px;left:199.50px;width:81px;text-align:center;">P</div><div class="t" style="top:662.64px;font-size:12px;line-height:12px;color:#000;letter-spacing:-0.2px;left:263px;">SINGARAJA</div><div class="t" style="top:662.64px;font-size:12px;line-height:12px;color:#000;letter-spacing:-0.13px;left:344.50px;width:147px;text-align:center;">###############</div><div class="t" style="top:662.64px;font-size:12px;line-height:12px;color:#000;letter-spacing:0.2px;left:451.50px;width:101px;text-align:center;">20</div><div class="t" style="top:662.64px;font-size:12px;line-height:12px;color:#000;letter-spacing:0.05px;left:512.50px;width:83px;text-align:center;">-</div><div class="t" style="top:662.64px;font-size:12px;line-height:12px;color:#000;letter-spacing:0.176px;left:578px;">Hindu</div><div class="t" style="top:662.64px;font-size:12px;line-height:12px;color:#000;letter-spacing:0.165px;left:626px;">Belum Kawin</div><div class="t" style="top:662.64px;font-size:12px;line-height:12px;color:#000;letter-spacing:0.165px;left:709px;">Famili Lain</div><div class="t" style="top:654.64px;font-size:12px;line-height:12px;color:#000;letter-spacing:0.176px;left:823px;">Tamat</div><div class="t" style="top:670.64px;font-size:12px;line-height:12px;color:#000;letter-spacing:0.086px;left:823px;">SLTA/Sederajat</div><div class="t" style="top:654.64px;font-size:12px;line-height:12px;color:#000;letter-spacing:0.165px;left:939px;">Belum/Tidak</div><div class="t" style="top:670.64px;font-size:12px;line-height:12px;color:#000;letter-spacing:0.203px;left:939px;">Bekerja</div><div class="t" style="top:646.64px;font-size:12px;line-height:12px;color:#000;letter-spacing:-0.164px;left:1055px;">LUH SRI</div><div class="t" style="top:662.64px;font-size:12px;line-height:12px;color:#000;letter-spacing:-0.181px;left:1055px;">BUDIANI PADMA</div><div class="t" style="top:678.64px;font-size:12px;line-height:12px;color:#000;letter-spacing:-0.2px;left:1055px;">DEWI</div><div class="t" style="top:654.64px;font-size:12px;line-height:12px;color:#000;letter-spacing:-0.162px;left:1155px;">I NYOMAN ALIT</div><div class="t" style="top:670.64px;font-size:12px;line-height:12px;color:#000;letter-spacing:-0.2px;left:1155px;">SUSENA</div><div class="t" style="top:654.64px;font-size:12px;line-height:12px;color:#000;letter-spacing:0.156px;left:1261px;">Lingk. Pekandelan, Jl.</div><div class="t" style="top:670.64px;font-size:12px;line-height:12px;color:#000;letter-spacing:0.145px;left:1261px;">Sultan Agung No. 101</div><div class="t" style="top:702.64px;font-size:12px;line-height:12px;color:#000;letter-spacing:0.2px;left:5.50px;width:87px;text-align:center;">9</div><div class="t" style="top:702.64px;font-size:12px;line-height:12px;color:#000;letter-spacing:-0.174px;left:75px;">I KOMANG WIDIANTARA</div><div class="t" style="top:702.64px;font-size:12px;line-height:12px;color:#000;letter-spacing:-0.2px;left:199.50px;width:81px;text-align:center;">L</div><div class="t" style="top:702.64px;font-size:12px;line-height:12px;color:#000;letter-spacing:-0.2px;left:263px;">SINGARAJA</div><div class="t" style="top:702.64px;font-size:12px;line-height:12px;color:#000;letter-spacing:-0.13px;left:344.50px;width:147px;text-align:center;">###############</div><div class="t" style="top:702.64px;font-size:12px;line-height:12px;color:#000;letter-spacing:0.2px;left:451.50px;width:101px;text-align:center;">47</div><div class="t" style="top:702.64px;font-size:12px;line-height:12px;color:#000;letter-spacing:0.05px;left:512.50px;width:83px;text-align:center;">-</div><div class="t" style="top:702.64px;font-size:12px;line-height:12px;color:#000;letter-spacing:0.176px;left:578px;">Hindu</div><div class="t" style="top:702.64px;font-size:12px;line-height:12px;color:#000;letter-spacing:0.176px;left:626px;">Kawin</div><div class="t" style="top:702.64px;font-size:12px;line-height:12px;color:#000;letter-spacing:0.193px;left:709px;">Kepala Keluarga</div><div class="t" style="top:694.64px;font-size:12px;line-height:12px;color:#000;letter-spacing:0.176px;left:823px;">Tamat</div><div class="t" style="top:710.64px;font-size:12px;line-height:12px;color:#000;letter-spacing:0.086px;left:823px;">SLTA/Sederajat</div><div class="t" style="top:702.64px;font-size:12px;line-height:12px;color:#000;letter-spacing:0.072px;left:939px;">Karyawan BUMN</div><div class="t" style="top:702.64px;font-size:12px;line-height:12px;color:#000;letter-spacing:0.05px;left:1055px;">-</div><div class="t" style="top:702.64px;font-size:12px;line-height:12px;color:#000;letter-spacing:0.05px;left:1155px;">-</div><div class="t" style="top:702.64px;font-size:12px;line-height:12px;color:#000;letter-spacing:-0.171px;left:1261px;">LINGK. PEKANDELAN</div><div class="t" style="top:702.64px;font-size:12px;line-height:12px;color:#000;letter-spacing:0.2px;left:1395px;">0818346056</div><div class="t" style="top:734.64px;font-size:12px;line-height:12px;color:#000;letter-spacing:0.2px;left:5.50px;width:87px;text-align:center;">10</div><div class="t" style="top:734.64px;font-size:12px;line-height:12px;color:#000;letter-spacing:-0.183px;left:75px;">KOMANG SWANDEWI</div><div class="t" style="top:734.64px;font-size:12px;line-height:12px;color:#000;letter-spacing:-0.2px;left:199.50px;width:81px;text-align:center;">P</div><div class="t" style="top:734.64px;font-size:12px;line-height:12px;color:#000;letter-spacing:-0.2px;left:263px;">BANYUATIS</div><div class="t" style="top:734.64px;font-size:12px;line-height:12px;color:#000;letter-spacing:-0.13px;left:344.50px;width:147px;text-align:center;">###############</div><div class="t" style="top:734.64px;font-size:12px;line-height:12px;color:#000;letter-spacing:0.2px;left:451.50px;width:101px;text-align:center;">42</div><div class="t" style="top:734.64px;font-size:12px;line-height:12px;color:#000;letter-spacing:0.05px;left:512.50px;width:83px;text-align:center;">-</div><div class="t" style="top:734.64px;font-size:12px;line-height:12px;color:#000;letter-spacing:0.176px;left:578px;">Hindu</div><div class="t" style="top:734.64px;font-size:12px;line-height:12px;color:#000;letter-spacing:0.176px;left:626px;">Kawin</div><div class="t" style="top:734.64px;font-size:12px;line-height:12px;color:#000;letter-spacing:0.176px;left:709px;">Istri</div><div class="t" style="top:726.64px;font-size:12px;line-height:12px;color:#000;letter-spacing:0.176px;left:823px;">Tamat</div><div class="t" style="top:742.64px;font-size:12px;line-height:12px;color:#000;letter-spacing:0.086px;left:823px;">SLTA/Sederajat</div><div class="t" style="top:726.64px;font-size:12px;line-height:12px;color:#000;letter-spacing:0.187px;left:939px;">Mengurus Rumah</div><div class="t" style="top:742.64px;font-size:12px;line-height:12px;color:#000;letter-spacing:0.192px;left:939px;">Tangga</div><div class="t" style="top:734.64px;font-size:12px;line-height:12px;color:#000;letter-spacing:0.05px;left:1055px;">-</div><div class="t" style="top:734.64px;font-size:12px;line-height:12px;color:#000;letter-spacing:0.05px;left:1155px;">-</div><div class="t" style="top:734.64px;font-size:12px;line-height:12px;color:#000;letter-spacing:-0.171px;left:1261px;">LINGK. PEKANDELAN</div><div class="t" style="top:766.64px;font-size:12px;line-height:12px;color:#000;letter-spacing:0.2px;left:5.50px;width:87px;text-align:center;">11</div><div class="t" style="top:758.64px;font-size:12px;line-height:12px;color:#000;letter-spacing:-0.162px;left:75px;">LUH PUTU DIAN</div><div class="t" style="top:774.64px;font-size:12px;line-height:12px;color:#000;letter-spacing:-0.179px;left:75px;">ARTANTI DEWI</div><div class="t" style="top:766.64px;font-size:12px;line-height:12px;color:#000;letter-spacing:-0.2px;left:199.50px;width:81px;text-align:center;">P</div><div class="t" style="top:766.64px;font-size:12px;line-height:12px;color:#000;letter-spacing:-0.2px;left:263px;">SINGARAJA</div><div class="t" style="top:766.64px;font-size:12px;line-height:12px;color:#000;letter-spacing:-0.13px;left:344.50px;width:147px;text-align:center;">###############</div><div class="t" style="top:766.64px;font-size:12px;line-height:12px;color:#000;letter-spacing:0.2px;left:451.50px;width:101px;text-align:center;">16</div><div class="t" style="top:766.64px;font-size:12px;line-height:12px;color:#000;letter-spacing:0.05px;left:512.50px;width:83px;text-align:center;">-</div><div class="t" style="top:766.64px;font-size:12px;line-height:12px;color:#000;letter-spacing:0.176px;left:578px;">Hindu</div><div class="t" style="top:766.64px;font-size:12px;line-height:12px;color:#000;letter-spacing:0.165px;left:626px;">Belum Kawin</div><div class="t" style="top:766.64px;font-size:12px;line-height:12px;color:#000;letter-spacing:0.153px;left:709px;">Anak</div><div class="t" style="top:766.64px;font-size:12px;line-height:12px;color:#000;letter-spacing:0.086px;left:823px;">SLTP/Sederajat</div><div class="t" style="top:766.64px;font-size:12px;line-height:12px;color:#000;letter-spacing:0.202px;left:939px;">Pelajar/Mahasiswa</div><div class="t" style="top:758.64px;font-size:12px;line-height:12px;color:#000;letter-spacing:-0.2px;left:1055px;">KOMANG</div><div class="t" style="top:774.64px;font-size:12px;line-height:12px;color:#000;letter-spacing:-0.2px;left:1055px;">SWANDEWI</div><div class="t" style="top:758.64px;font-size:12px;line-height:12px;color:#000;letter-spacing:-0.169px;left:1155px;">I KOMANG</div><div class="t" style="top:774.64px;font-size:12px;line-height:12px;color:#000;letter-spacing:-0.2px;left:1155px;">WIDIANTARA</div><div class="t" style="top:766.64px;font-size:12px;line-height:12px;color:#000;letter-spacing:-0.171px;left:1261px;">LINGK. PEKANDELAN</div><div class="t" style="top:798.64px;font-size:12px;line-height:12px;color:#000;letter-spacing:0.2px;left:5.50px;width:87px;text-align:center;">12</div><div class="t" style="top:790.64px;font-size:12px;line-height:12px;color:#000;letter-spacing:-0.171px;left:75px;">KADEK TRISNA DITA</div><div class="t" style="top:806.64px;font-size:12px;line-height:12px;color:#000;letter-spacing:-0.2px;left:75px;">SAHYANI</div><div class="t" style="top:798.64px;font-size:12px;line-height:12px;color:#000;letter-spacing:-0.2px;left:199.50px;width:81px;text-align:center;">P</div><div class="t" style="top:798.64px;font-size:12px;line-height:12px;color:#000;letter-spacing:-0.2px;left:263px;">DENPASAR</div><div class="t" style="top:798.64px;font-size:12px;line-height:12px;color:#000;letter-spacing:-0.13px;left:344.50px;width:147px;text-align:center;">###############</div><div class="t" style="top:798.64px;font-size:12px;line-height:12px;color:#000;letter-spacing:0.2px;left:451.50px;width:101px;text-align:center;">13</div><div class="t" style="top:798.64px;font-size:12px;line-height:12px;color:#000;letter-spacing:0.05px;left:512.50px;width:83px;text-align:center;">-</div><div class="t" style="top:798.64px;font-size:12px;line-height:12px;color:#000;letter-spacing:0.176px;left:578px;">Hindu</div><div class="t" style="top:798.64px;font-size:12px;line-height:12px;color:#000;letter-spacing:0.165px;left:626px;">Belum Kawin</div><div class="t" style="top:798.64px;font-size:12px;line-height:12px;color:#000;letter-spacing:0.153px;left:709px;">Anak</div><div class="t" style="top:798.64px;font-size:12px;line-height:12px;color:#000;letter-spacing:0.134px;left:823px;">SD/Sederajat</div><div class="t" style="top:798.64px;font-size:12px;line-height:12px;color:#000;letter-spacing:0.202px;left:939px;">Pelajar/Mahasiswa</div><div class="t" style="top:790.64px;font-size:12px;line-height:12px;color:#000;letter-spacing:-0.2px;left:1055px;">KOMANG</div><div class="t" style="top:806.64px;font-size:12px;line-height:12px;color:#000;letter-spacing:-0.2px;left:1055px;">SWANDEWI</div><div class="t" style="top:790.64px;font-size:12px;line-height:12px;color:#000;letter-spacing:-0.169px;left:1155px;">I KOMANG</div><div class="t" style="top:806.64px;font-size:12px;line-height:12px;color:#000;letter-spacing:-0.2px;left:1155px;">WIDIANTARA</div><div class="t" style="top:798.64px;font-size:12px;line-height:12px;color:#000;letter-spacing:-0.171px;left:1261px;">LINGK. PEKANDELAN</div></div><svg class="r" style="left:1393px;top:389px;" width="7" height="7" viewBox="0 0 7 7"><path d="M0 0h6L0 6z" fill="#0e7a0e"/></svg><svg class="r" style="left:1393px;top:693px;" width="7" height="7" viewBox="0 0 7 7"><path d="M0 0h6L0 6z" fill="#0e7a0e"/></svg><div class="r" style="left:24px;top:221px;width:1461px;height:2px;background:#217346"></div><div class="r" style="left:24px;top:250px;width:1457px;height:2px;background:#217346"></div><div class="r" style="left:24px;top:221px;width:2px;height:31px;background:#217346"></div><div class="r" style="left:1483px;top:221px;width:2px;height:27px;background:#217346"></div><div class="r" style="left:1481px;top:248px;width:6px;height:6px;background:#217346;border:1px solid #fff"></div><div class="r" style="left:1579px;top:203px;width:21px;height:607px;background:#e6e6e6"></div><div class="r" style="left:1578px;top:222px;width:1px;height:588px;background:#a6a6a6"></div><div class="r" style="left:1582px;top:205px;width:15px;height:605px;background:#f0f0f0"></div><div class="r" style="left:1582px;top:205px;width:15px;height:15px;background:#fff;border:1px solid #a6a6a6"></div><svg class="r" style="left:1586px;top:210px;" width="8" height="5" viewBox="0 0 8 5"><path d="M0 4.5h8L4 0z" fill="#222"/></svg><div class="r" style="left:1582px;top:220px;width:15px;height:26px;background:#fff;border:1px solid #a6a6a6"></div><div class="r" style="left:1582px;top:796px;width:15px;height:15px;background:#fff;border:1px solid #a6a6a6"></div><svg class="r" style="left:1586px;top:802px;" width="8" height="5" viewBox="0 0 8 5"><path d="M0 0h8L4 4.5z" fill="#222"/></svg><div class="r" style="left:0px;top:810px;width:1579px;height:1px;background:#a6a6a6"></div><div class="r" style="left:0px;top:811px;width:1600px;height:27px;background:#e6e6e6"></div><div class="r" style="left:0px;top:838px;width:1600px;height:1px;background:#d4d4d4"></div><svg class="r" style="left:26px;top:818px;" width="6" height="9" viewBox="0 0 6 9"><path d="M5 0v8.5L0.5 4.25z" fill="#bdbdbd"/></svg><svg class="r" style="left:55px;top:818px;" width="6" height="9" viewBox="0 0 6 9"><path d="M0.5 0v8.5L5 4.25z" fill="#bdbdbd"/></svg><div class="r" style="left:100px;top:811px;width:47px;height:24px;background:#fff;border-left:1px solid #c6c6c6;border-right:1px solid #c6c6c6"></div><div class="r" style="left:100px;top:833px;width:47px;height:2px;background:#217346"></div><div class="t" style="top:817.42px;font-size:12.5px;line-height:12.5px;color:#217346;font-weight:700;letter-spacing:-0.2px;left:93.50px;width:60px;text-align:center;">REF</div><div class="t" style="top:817.50px;font-size:12.4px;line-height:12.4px;color:#444;left:159.5px;">FORM. UMUR</div><div class="r" style="left:253px;top:814px;width:1px;height:20px;background:#b4b4b4"></div><div class="t" style="top:817.50px;font-size:12.4px;line-height:12.4px;color:#444;left:269.5px;">FORM. PENDIDIKAN</div><div class="r" style="left:402px;top:814px;width:1px;height:20px;background:#b4b4b4"></div><div class="t" style="top:817.50px;font-size:12.4px;line-height:12.4px;color:#444;left:419px;">FORM. MATA PENCAHARIAN</div><div class="r" style="left:605px;top:814px;width:1px;height:20px;background:#b4b4b4"></div><div class="t" style="top:817.50px;font-size:12.4px;line-height:12.4px;color:#444;left:619px;">BUKU MENINGGAL</div><div class="r" style="left:743px;top:814px;width:1px;height:20px;background:#b4b4b4"></div><svg class="r" style="left:777px;top:816px;" width="16" height="16" viewBox="0 0 16 16"><circle cx="8" cy="8" r="7.3" fill="none" stroke="#777" stroke-width="1.1"/><path d="M8 4v8M4 8h8" stroke="#666" stroke-width="1.6"/></svg><div class="r" style="left:960px;top:819px;width:2px;height:2px;background:#a8a8a8"></div><div class="r" style="left:960px;top:823px;width:2px;height:2px;background:#a8a8a8"></div><div class="r" style="left:960px;top:827px;width:2px;height:2px;background:#a8a8a8"></div><div class="r" style="left:977px;top:817px;width:602px;height:15px;background:#f0f0f0"></div><div class="r" style="left:977px;top:817px;width:15px;height:15px;background:#fff;border:1px solid #a6a6a6"></div><svg class="r" style="left:982px;top:821px;" width="5" height="8" viewBox="0 0 5 8"><path d="M4.5 0v7.5L0 3.75z" fill="#222"/></svg><div class="r" style="left:991px;top:817px;width:542px;height:15px;background:#fff;border:1px solid #a6a6a6"></div><div class="r" style="left:1564px;top:817px;width:15px;height:15px;background:#fff;border:1px solid #a6a6a6"></div><svg class="r" style="left:1570px;top:821px;" width="5" height="8" viewBox="0 0 5 8"><path d="M0 0v7.5L4.5 3.75z" fill="#222"/></svg><div class="r" style="left:0px;top:839px;width:1600px;height:21px;background:#f3f3f3"></div><div class="t" style="top:845.52px;font-size:11.2px;line-height:11.2px;color:#333;letter-spacing:-0.2px;left:11.5px;">Ready</div><svg class="r" style="left:60px;top:842px;" width="18" height="16" viewBox="0 0 18 16"><path d="M7 2.5A5.8 5.8 0 1 0 12.5 9" fill="none" stroke="#555" stroke-width="1.3" stroke-dasharray="2.2 1.4"/><path d="M7 0.5v7h5" fill="none" stroke="#555" stroke-width="1.2"/><path d="M10 8.5l6.5 6.5M16.5 8.5L10 15" stroke="#333" stroke-width="1.6"/></svg><div class="t" style="top:844.69px;font-size:11px;line-height:11px;color:#333;font-weight:700;letter-spacing:-0.25px;left:80.5px;">Accessibility: Investigate</div><div class="r" style="left:1300px;top:839px;width:40px;height:21px;background:#c6c6c6"></div><svg class="r" style="left:1313px;top:842px;" width="13" height="13" viewBox="0 0 13 13"><rect x="0" y="0" width="13" height="13" fill="#dcdcdc"/><path d="M0.5 0.5h12v12h-12zM0.5 4.5h12M0.5 8.5h12M4.5 0.5v12M8.5 0.5v12" fill="none" stroke="#6a6a6a" stroke-width="1"/></svg><svg class="r" style="left:1353px;top:842px;" width="14" height="13" viewBox="0 0 14 13"><rect x="0.5" y="0.5" width="13" height="12" fill="none" stroke="#6a6a6a"/><rect x="3.5" y="2.5" width="7" height="8" fill="none" stroke="#6a6a6a"/><path d="M5 4.5h4M5 6.5h4M5 8.5h4" stroke="#6a6a6a" stroke-width="1"/></svg><svg class="r" style="left:1393px;top:842px;" width="14" height="13" viewBox="0 0 14 13"><rect x="0.5" y="0.5" width="13" height="12" fill="none" stroke="#6a6a6a"/><path d="M0.5 7.5h8V0.5M4.5 0.5v7" fill="none" stroke="#6a6a6a"/></svg><div class="r" style="left:1426px;top:848px;width:8px;height:1px;background:#444"></div><div class="r" style="left:1439px;top:849px;width:100px;height:1px;background:#777"></div><div class="r" style="left:1487px;top:844px;width:5px;height:11px;background:#555"></div><div class="r" style="left:1544px;top:848px;width:8px;height:1px;background:#444"></div><div class="r" style="left:1547.5px;top:844.5px;width:1px;height:8px;background:#444"></div><div class="t" style="top:844.02px;font-size:11.2px;line-height:11.2px;color:#333;letter-spacing:-0.35px;left:1566px;">100%</div><div class="r" style="left:0px;top:860px;width:1600px;height:40px;background:linear-gradient(90deg,#1f3540 0%,#203540 30%,#1e3040 60%,#1b2a3e 100%)"></div><svg class="r" style="left:16px;top:872px;" width="17" height="17" viewBox="0 0 17 17"><path d="M0 2.3L7 1.3v6.6H0zM8 1.2L17 0v7.9H8zM0 8.9h7v6.7L0 14.6zM8 8.9h9V17L8 15.8z" fill="#fff"/></svg><div class="r" style="left:48px;top:860px;width:288px;height:40px;background:#f0f0f0;border-top:1px solid #cfcfcf"></div><svg class="r" style="left:59px;top:872px;" width="18" height="17" viewBox="0 0 18 17"><circle cx="11" cy="6.5" r="5.3" fill="none" stroke="#222" stroke-width="1.3"/><path d="M7.2 10.3L1 16.5" stroke="#222" stroke-width="1.5"/></svg><div class="t" style="top:874.31px;font-size:14.4px;line-height:14.4px;color:#333;left:88.5px;">Type here to search</div><svg class="r" style="left:264px;top:863px;" width="60" height="36" viewBox="0 0 60 36"><defs><linearGradient id="sc" x1="0" y1="0" x2="0.2" y2="1"><stop offset="0" stop-color="#ece6d6"/><stop offset="1" stop-color="#c9bfa4"/></linearGradient><linearGradient id="cb" x1="0" y1="0" x2="1" y2="0"><stop offset="0" stop-color="#454a50"/><stop offset="1" stop-color="#1f2226"/></linearGradient></defs><path d="M14 11v6.5c0 2.5 5 4 11 4s11-2 11-4.5V9z" fill="url(#cb)"/><path d="M0.5 14L23 3.5 47 1 25.5 12.5z" fill="#3b3e43"/><path d="M0.5 14L25.5 12.5 47 1 47.5 2 26 13.5 0.8 15z" fill="#222428"/><path d="M25 6.5L13 12.3V24" fill="none" stroke="#e6ae1e" stroke-width="1.3"/><path d="M11 23.5h4l0.5 7h-5z" fill="#e6ae1e"/><path d="M18 26L54 13.5c3-1 5.5 5 2.5 6.3L22 34.8c-3 1.2-6-7.5-4-8.8z" fill="url(#sc)"/><path d="M20 31.5L56 18.5" stroke="#b5aa8a" stroke-width="0.7" opacity="0.7"/><path d="M40 18.5l3.5-1.5 2.5 2-1 7.5 3.5 1-4 1-2.5-1.5z" fill="#d8202a"/><circle cx="43" cy="21.5" r="1.8" fill="#e8d68a"/></svg><svg class="r" style="left:351px;top:872px;" width="18" height="15" viewBox="0 0 18 15"><path d="M0.5 1v14M0.5 2.5h12.5M0.5 12.5h12.5M13 2.5v10M3 0.5h8M3 14.5h8M15.5 1v5M15.5 9v5" fill="none" stroke="#fff" stroke-width="1.2"/></svg><svg class="r" style="left:399px;top:868px;" width="25" height="25" viewBox="0 0 25 25"><defs><linearGradient id="e1" x1="0" y1="0" x2="1" y2="0.7"><stop offset="0" stop-color="#2bb5f0"/><stop offset="0.55" stop-color="#2ccaca"/><stop offset="1" stop-color="#62e35a"/></linearGradient><linearGradient id="e2" x1="0" y1="0" x2="0.4" y2="1"><stop offset="0" stop-color="#1b8fe2"/><stop offset="1" stop-color="#1060b8"/></linearGradient></defs><circle cx="12" cy="12" r="12" fill="url(#e1)"/><path d="M0.3 10C1.5 5.5 6 4.2 9.8 5.2 5.8 7 4 11 5 15.2c1.2 4.5 5.6 7.3 10.6 6.8 3.3-.4 5.8-2.5 7-5-1.8 5-6.3 7.8-11 7.8C5.2 24.8 0 19.5 0 12.5z" fill="url(#e2)"/><path d="M6.2 13.5C6 9.5 8.7 7.3 11.6 7.6 9.2 9 8.6 12 10 14.3c2 3.2 7.5 4.2 12.8 2.3-1.3 3.8-5.2 6.6-9.6 6.6-4.2 0-7-4.5-7-9.7z" fill="#0e58a6"/><ellipse cx="12.6" cy="11.6" rx="2.6" ry="2.3" fill="#213641"/></svg><svg class="r" style="left:449px;top:870px;" width="22" height="20" viewBox="0 0 22 20"><path d="M0 1h9l1 1.5h12V18H0z" fill="#e9a300"/><path d="M0 3.5h22V18H0z" fill="#fdd56a"/><path d="M4 11.5q0-1 1-1h12q1 0 1 1V19h-4.5v-5h-5v5H4z" fill="#3c97e6"/></svg><div class="r" style="left:440px;top:898px;width:40px;height:2px;background:#76b9ed"></div><svg class="r" style="left:496px;top:868px;" width="25" height="25" viewBox="0 0 25 25"><path d="M7 6V3.5C7 1.5 8.5 0.8 12.5 0.8S18 1.5 18 3.5V6" fill="none" stroke="#2a8ad8" stroke-width="1.8"/><rect x="1" y="5.5" width="23" height="19" rx="3" fill="#f2f2f2"/><rect x="8" y="10" width="4" height="4" fill="#f25022"/><rect x="13" y="10" width="4" height="4" fill="#7fba00"/><rect x="8" y="15" width="4" height="4" fill="#00a4ef"/><rect x="13" y="15" width="4" height="4" fill="#ffb900"/></svg><svg class="r" style="left:545px;top:868px;" width="25" height="23" viewBox="0 0 25 23"><defs><linearGradient id="m1" x1="0" y1="0" x2="1" y2="1"><stop offset="0" stop-color="#2b8fe0"/><stop offset="1" stop-color="#4cc6f7"/></linearGradient></defs><path d="M0.5 8L12.5 0.5 24.5 8v14.5H0.5z" fill="#0f5faf"/><path d="M0.5 8h24v14.5H0.5z" fill="url(#m1)"/><path d="M0.5 8h24L12.5 16z" fill="#f2f2f2"/><path d="M0.5 22.5L10.5 14.5l2 1.5 2-1.5 10 8z" fill="#1f9be6" opacity="0.6"/></svg><svg class="r" style="left:594px;top:868px;" width="26" height="26" viewBox="0 0 26 26"><circle cx="13" cy="13" r="12.5" fill="#dd4b3e"/><path d="M13 13L2.2 6.8A12.5 12.5 0 0 0 7 23.8z" fill="#1da462"/><path d="M13 13h12.5A12.5 12.5 0 0 1 7 23.8z" fill="#fbc02d"/><path d="M13 13L2.2 6.8A12.5 12.5 0 0 1 25.2 10z" fill="#dd4b3e"/><circle cx="13" cy="13" r="5.6" fill="#fff"/><circle cx="13" cy="13" r="4.5" fill="#4285f4"/></svg><div class="r" style="left:587px;top:898px;width:40px;height:2px;background:#76b9ed"></div><div class="r" style="left:632px;top:860px;width:48px;height:40px;background:#4a5863"></div><svg class="r" style="left:643px;top:869px;" width="26" height="23" viewBox="0 0 26 23"><rect x="6" y="0.5" width="19" height="22" rx="1.5" fill="#21a366"/><rect x="6" y="0.5" width="19" height="7.5" fill="#33c481"/><rect x="15.5" y="8" width="9.5" height="7" fill="#107c41"/><rect x="6" y="15" width="19" height="7.5" fill="#185c37"/><rect x="0.5" y="5" width="13" height="13" rx="1.2" fill="#107c41"/><path d="M3.8 8l5.5 7.5M9.3 8L3.8 15.5" stroke="#fff" stroke-width="1.6"/></svg><div class="r" style="left:632px;top:898px;width:48px;height:2px;background:#8cc8f5"></div><svg class="r" style="left:692px;top:868px;" width="25" height="25" viewBox="0 0 25 25"><path d="M11 3C5 3 0.5 7 0.5 12c0 4 3 7 6 7 2 0 2-2 3-2 2 0 2 4 6 4 5 0 8-4 8-9 0-5-5-9-12.5-9z" fill="#cfe0ee"/><circle cx="6" cy="9" r="2" fill="#e33"/><circle cx="10" cy="6" r="1.8" fill="#fc3"/><circle cx="15" cy="6.5" r="1.8" fill="#4c4"/><circle cx="5" cy="14" r="1.8" fill="#39f"/><path d="M22.5 0.5L12 21l2 1.5L24.5 2z" fill="#e59a2e"/></svg><div class="r" style="left:685px;top:898px;width:40px;height:2px;background:#76b9ed"></div><svg class="r" style="left:1212px;top:866px;" width="28" height="28" viewBox="0 0 28 28"><defs><linearGradient id="og" x1="0" y1="0" x2="0" y2="1"><stop offset="0" stop-color="#f7c02a"/><stop offset="1" stop-color="#f08516"/></linearGradient><linearGradient id="cg" x1="0" y1="0" x2="0" y2="1"><stop offset="0" stop-color="#b9d3f5"/><stop offset="1" stop-color="#e3ecf8"/></linearGradient><mask id="wm"><rect width="28" height="28" fill="#fff"/><circle cx="12" cy="8.5" r="9.6" fill="#000"/></mask></defs><circle cx="15" cy="13.2" r="11" fill="url(#og)" mask="url(#wm)"/><path d="M3.5 11.5C2 11.5 1.8 8 3.8 7.8 4 5.5 6 4.5 7.5 5 8.5 2 12.5 2 13.5 4.8 15.5 4.8 16 7 15.6 8v3.5z" fill="url(#cg)"/><circle cx="21" cy="7.6" r="6" fill="#d3321f"/><path d="M19.8 5.2l1.8-1.2v7.3" fill="none" stroke="#fff" stroke-width="1.4"/></svg><div class="t" style="top:874.24px;font-size:13.3px;line-height:13.3px;color:#fff;left:1247px;">27°C&nbsp;&nbsp;Cerah</div><svg class="r" style="left:1344px;top:876px;" width="14" height="8" viewBox="0 0 14 8"><path d="M1 7L7 1l6 6" fill="none" stroke="#fff" stroke-width="1.3"/></svg><svg class="r" style="left:1367px;top:872px;" width="17" height="17" viewBox="0 0 17 17"><circle cx="8.5" cy="8.5" r="8" fill="#9bc53d"/><circle cx="8.5" cy="8.5" r="6" fill="#f2d21c"/><path d="M8.5 4v9M4 8.5h9" stroke="#1f8f3a" stroke-width="2.6"/></svg><svg class="r" style="left:1393px;top:870px;" width="13" height="22" viewBox="0 0 13 22"><rect x="1" y="6" width="7.5" height="9" rx="1" fill="none" stroke="#fff" stroke-width="1.1"/><path d="M8.5 9l3.5-2v7l-3.5-2" fill="none" stroke="#fff" stroke-width="1.1"/><path d="M2 3.5c2-2 6-2 8 0M2 18c2 2 6 2 8 0" fill="none" stroke="#fff" stroke-width="1.1"/></svg><svg class="r" style="left:1415px;top:871px;" width="18" height="18" viewBox="0 0 18 18"><path d="M0.5 3.5L15.5 0.5v13L0.5 15z" fill="none" stroke="#fff" stroke-width="1.1"/><path d="M5 10c0-3 2-5 5-5M8.5 3.5L10 5 8.5 6.5" fill="none" stroke="#fff" stroke-width="1"/><circle cx="13" cy="14" r="3.3" fill="#f7870f"/></svg><svg class="r" style="left:1441px;top:872px;" width="15" height="16" viewBox="0 0 15 16"><path d="M1 15A13 13 0 0 1 14 2M4 15A10 10 0 0 1 14 5M7 15A7 7 0 0 1 14 8M10 15A4 4 0 0 1 14 11" fill="none" stroke="#fff" stroke-width="1.1"/><circle cx="13" cy="14" r="1.3" fill="#fff"/></svg><svg class="r" style="left:1462px;top:872px;" width="18" height="16" viewBox="0 0 18 16"><path d="M0.5 5.5h3.5L9 1v14l-5-4.5H0.5z" fill="none" stroke="#fff" stroke-width="1.1"/><path d="M11.5 5a4 4 0 0 1 0 6M13.5 3a7 7 0 0 1 0 10M15.5 1a10 10 0 0 1 0 14" fill="none" stroke="#fff" stroke-width="1" opacity="0.85"/></svg><div class="t" style="top:865.17px;font-size:12.2px;line-height:12.2px;color:#fff;left:1474.50px;width:80px;text-align:center;">5:03 AM</div><div class="t" style="top:882.67px;font-size:12.2px;line-height:12.2px;color:#fff;left:1475.00px;width:80px;text-align:center;">5/9/2024</div><svg class="r" style="left:1558px;top:872px;" width="18" height="18" viewBox="0 0 18 18"><path d="M0.6 0.6h16.3v12.6H9.2l-3.3 3.6v-3.6H0.6z" fill="none" stroke="#fff" stroke-width="1.1"/></svg><div class="r" style="left:1595px;top:860px;width:1px;height:40px;background:#56636e"></div>
</body></html>
